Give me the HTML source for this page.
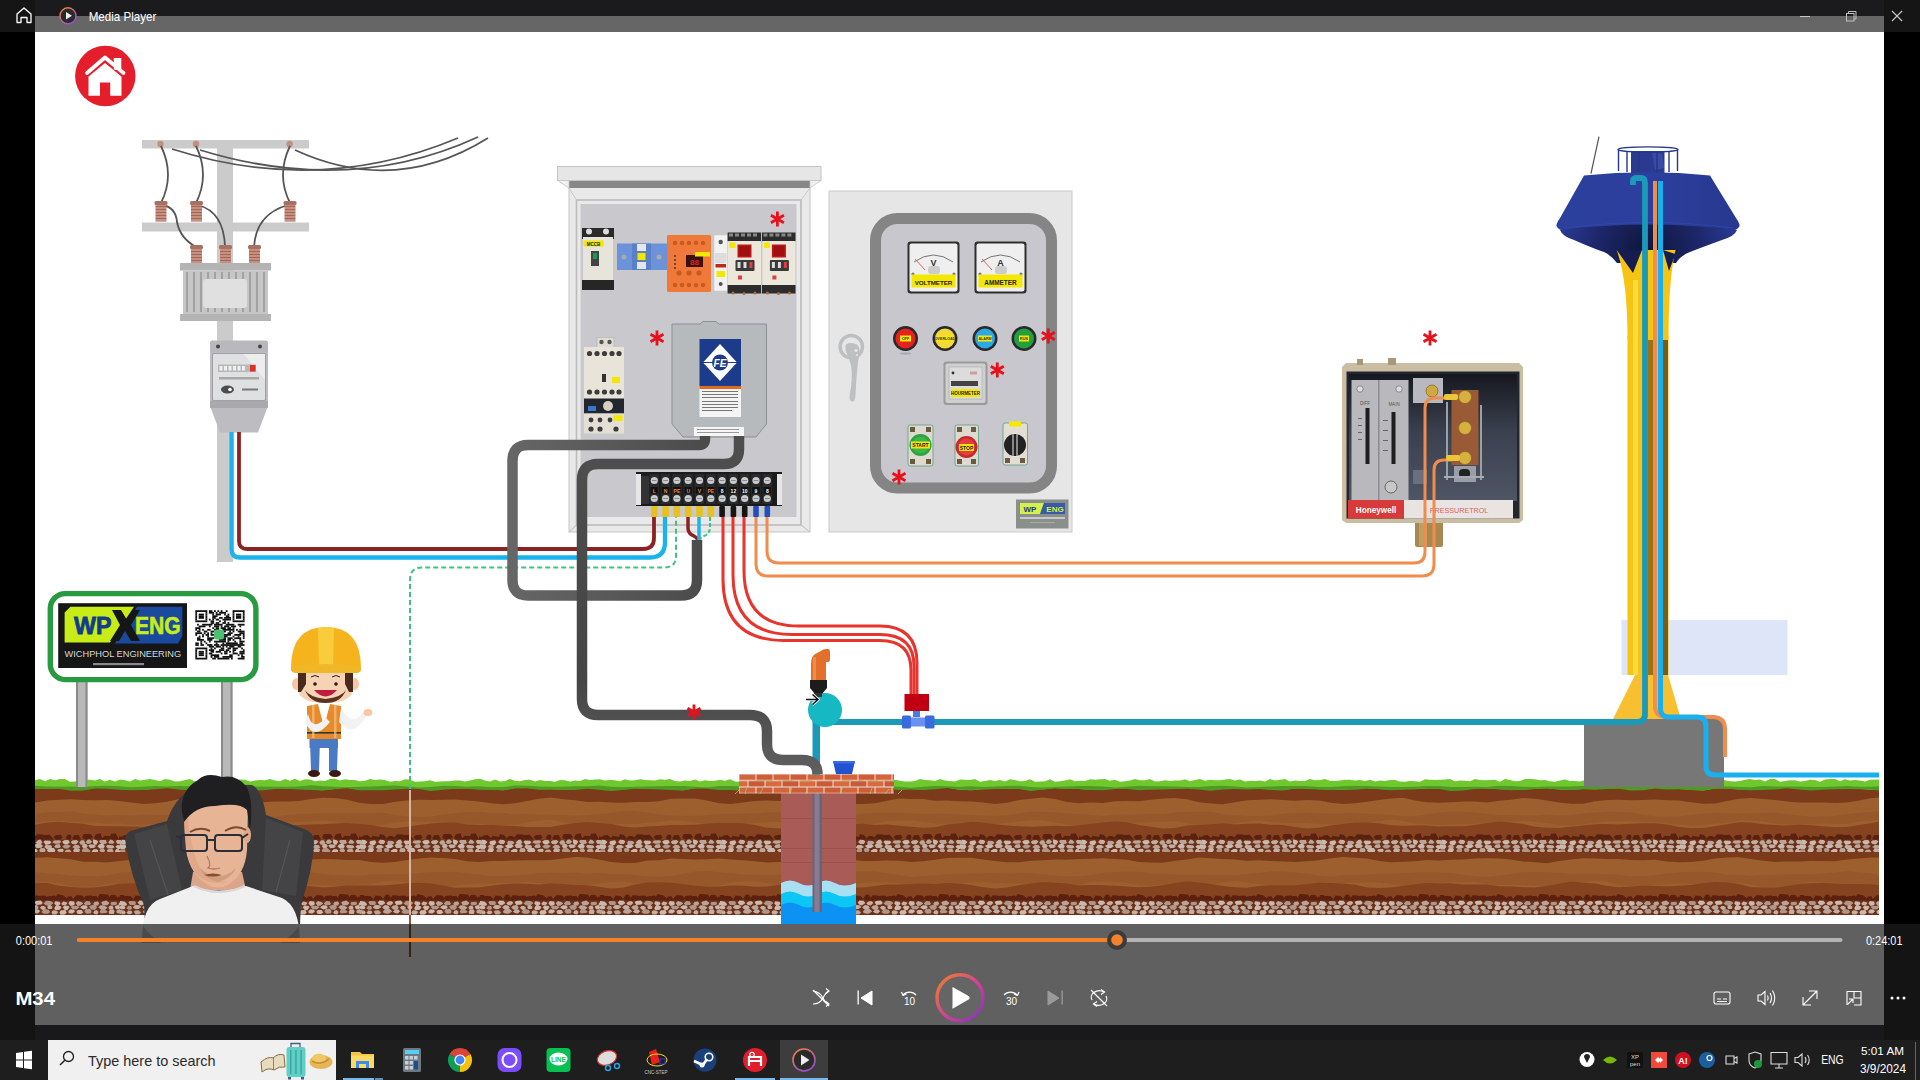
<!DOCTYPE html>
<html><head><meta charset="utf-8">
<style>
html,body{margin:0;padding:0;width:1920px;height:1080px;overflow:hidden;background:#000;font-family:"Liberation Sans",sans-serif;}
.a{position:absolute;}
#scene{position:absolute;left:0;top:0;}
</style></head><body>
<svg id="scene" width="1920" height="1080" viewBox="0 0 1920 1080">
<rect x="35" y="32" width="1849" height="993" fill="#fff"/>
<g id="ground">
<rect x="35" y="786" width="1844" height="127" fill="#9d5f2e"/>
<path d="M35,786.0 L1879,786.0 L1879,797.4 L1871,798.3 L1859,800.4 L1847,802.5 L1835,802.9 L1823,802.5 L1811,802.5 L1799,802.4 L1787,801.4 L1775,800.0 L1763,798.9 L1751,797.9 L1739,798.7 L1727,800.9 L1715,803.5 L1703,803.8 L1691,802.2 L1679,800.6 L1667,800.3 L1655,799.4 L1643,800.0 L1631,800.3 L1619,799.8 L1607,800.0 L1595,801.3 L1583,803.8 L1571,803.7 L1559,802.5 L1547,800.4 L1535,798.7 L1523,797.9 L1511,799.7 L1499,800.8 L1487,802.5 L1475,801.5 L1463,801.6 L1451,802.3 L1439,802.7 L1427,802.2 L1415,800.5 L1403,797.8 L1391,798.5 L1379,799.9 L1367,801.7 L1355,803.3 L1343,803.9 L1331,802.7 L1319,800.5 L1307,800.0 L1295,800.7 L1283,800.0 L1271,799.2 L1259,799.7 L1247,800.3 L1235,802.3 L1223,804.2 L1211,803.6 L1199,802.2 L1187,799.2 L1175,798.0 L1163,798.6 L1151,799.8 L1139,801.3 L1127,801.0 L1115,801.2 L1103,802.9 L1091,802.6 L1079,803.2 L1067,801.9 L1055,799.1 L1043,797.4 L1031,798.7 L1019,800.0 L1007,802.8 L995,803.9 L983,802.6 L971,801.5 L959,801.2 L947,800.6 L935,800.7 L923,799.0 L911,798.9 L899,798.5 L887,800.7 L875,803.2 L863,803.9 L851,803.9 L839,800.9 L827,799.1 L815,798.7 L803,799.0 L791,800.4 L779,801.0 L767,800.4 L755,801.0 L743,802.6 L731,804.0 L719,803.2 L707,800.4 L695,798.5 L683,798.4 L671,798.8 L659,801.3 L647,802.0 L635,802.1 L623,802.7 L611,802.5 L599,801.8 L587,802.0 L575,800.3 L563,799.2 L551,797.6 L539,798.8 L527,801.1 L515,803.3 L503,804.3 L491,803.2 L479,801.6 L467,800.4 L455,799.4 L443,799.8 L431,800.0 L419,799.7 L407,800.4 L395,801.8 L383,803.9 L371,804.0 L359,802.7 L347,799.7 L335,798.0 L323,797.8 L311,799.0 L299,801.1 L287,801.4 L275,801.6 L263,802.2 L251,802.6 L239,803.1 L227,802.3 L215,799.4 L203,798.4 L191,798.3 L179,799.1 L167,801.8 L155,803.2 L143,803.9 L131,802.4 L119,800.9 L107,800.0 L95,800.3 L83,799.9 L71,799.2 L59,799.7 L47,800.4 L35,802.4 Z" fill="#7b3b1b"/>
<path d="M35,814.0 L47,812.2 L59,812.0 L71,811.4 L83,813.4 L95,814.5 L107,815.4 L119,815.0 L131,815.6 L143,814.4 L155,815.0 L167,815.1 L179,814.7 L191,813.3 L203,812.2 L215,811.9 L227,812.8 L239,813.7 L251,815.7 L263,816.9 L275,816.7 L287,815.1 L299,814.3 L311,813.7 L323,813.1 L335,813.3 L347,812.9 L359,812.9 L371,812.9 L383,812.8 L395,814.7 L407,816.4 L419,817.0 L431,816.4 L443,814.6 L455,813.3 L467,812.0 L479,811.7 L491,812.9 L503,813.1 L515,814.7 L527,814.1 L539,814.8 L551,814.9 L563,814.9 L575,815.7 L587,815.1 L599,814.1 L611,813.0 L623,811.2 L635,810.9 L647,812.4 L659,814.6 L671,815.4 L683,815.8 L695,816.1 L707,814.9 L719,814.0 L731,814.2 L743,813.4 L755,813.5 L767,812.4 L779,812.2 L791,812.8 L803,814.0 L815,815.5 L827,816.2 L839,816.8 L851,815.6 L863,813.8 L875,812.7 L887,812.5 L899,812.7 L911,813.2 L923,814.2 L935,813.7 L947,813.7 L959,814.4 L971,814.9 L983,815.5 L995,815.8 L1007,815.2 L1019,813.5 L1031,811.8 L1043,811.7 L1055,812.4 L1067,813.2 L1079,814.2 L1091,815.1 L1103,816.1 L1115,814.6 L1127,814.9 L1139,814.5 L1151,814.0 L1163,814.2 L1175,812.5 L1187,811.8 L1199,811.8 L1211,811.9 L1223,814.3 L1235,815.3 L1247,816.1 L1259,815.9 L1271,815.4 L1283,813.7 L1295,812.9 L1307,812.7 L1319,813.2 L1331,813.7 L1343,813.5 L1355,813.0 L1367,813.7 L1379,814.2 L1391,815.1 L1403,816.3 L1415,816.3 L1427,814.3 L1439,812.7 L1451,811.5 L1463,811.7 L1475,812.4 L1487,813.8 L1499,815.1 L1511,815.1 L1523,815.5 L1535,815.4 L1547,814.4 L1559,815.5 L1571,815.0 L1583,813.4 L1595,812.6 L1607,811.8 L1619,812.1 L1631,812.6 L1643,814.5 L1655,816.4 L1667,816.8 L1679,816.5 L1691,814.7 L1703,813.8 L1715,812.8 L1727,813.3 L1739,813.5 L1751,813.2 L1763,813.1 L1775,812.6 L1787,814.2 L1799,815.6 L1811,816.8 L1823,816.6 L1835,816.1 L1847,813.9 L1859,813.0 L1871,812.1 L1879,811.6 L1879,820.6 L1871,820.6 L1859,821.6 L1847,823.7 L1835,824.0 L1823,823.3 L1811,824.2 L1799,824.4 L1787,824.5 L1775,823.4 L1763,821.4 L1751,820.5 L1739,820.4 L1727,822.7 L1715,823.8 L1703,825.0 L1691,825.5 L1679,824.4 L1667,823.3 L1655,822.2 L1643,822.0 L1631,821.4 L1619,821.3 L1607,821.4 L1595,822.8 L1583,824.2 L1571,825.5 L1559,824.9 L1547,823.1 L1535,821.7 L1523,820.7 L1511,821.6 L1499,822.3 L1487,822.5 L1475,823.7 L1463,824.1 L1451,824.6 L1439,824.7 L1427,824.1 L1415,823.3 L1403,820.9 L1391,819.6 L1379,821.2 L1367,822.7 L1355,824.9 L1343,824.5 L1331,824.2 L1319,824.0 L1307,823.0 L1295,822.7 L1283,822.9 L1271,821.9 L1259,820.3 L1247,821.8 L1235,823.0 L1223,825.0 L1211,826.4 L1199,825.3 L1187,823.3 L1175,821.2 L1163,821.7 L1151,821.9 L1139,822.7 L1127,822.4 L1115,822.9 L1103,823.8 L1091,824.6 L1079,825.1 L1067,824.6 L1055,822.4 L1043,820.4 L1031,820.1 L1019,821.4 L1007,822.8 L995,824.0 L983,824.4 L971,823.6 L959,824.2 L947,823.5 L935,823.6 L923,822.0 L911,820.5 L899,820.6 L887,821.3 L875,823.5 L863,825.0 L851,825.9 L839,823.8 L827,823.2 L815,822.1 L803,821.5 L791,821.8 L779,821.8 L767,822.3 L755,822.9 L743,824.0 L731,825.1 L719,825.6 L707,823.8 L695,822.4 L683,821.0 L671,820.6 L659,822.0 L647,822.7 L635,824.0 L623,823.8 L611,824.1 L599,824.8 L587,824.3 L575,823.4 L563,822.2 L551,819.6 L539,820.5 L527,822.2 L515,824.4 L503,825.1 L491,825.1 L479,823.8 L467,823.4 L455,822.9 L443,822.0 L431,822.3 L419,821.6 L407,821.2 L395,822.5 L383,824.8 L371,826.3 L359,825.5 L347,823.7 L335,821.8 L323,820.5 L311,821.3 L299,822.0 L287,822.5 L275,823.7 L263,823.6 L251,824.9 L239,825.3 L227,825.1 L215,823.3 L203,821.0 L191,819.6 L179,820.4 L167,823.1 L155,824.3 L143,824.6 L131,824.8 L119,823.2 L107,823.7 L95,822.5 L83,822.4 L71,821.7 L59,820.7 L47,821.2 L35,822.7 Z" fill="#96582a"/>
<path d="M35,824.7 L47,822.4 L59,821.7 L71,822.8 L83,823.7 L95,826.0 L107,826.3 L119,826.2 L131,826.5 L143,826.7 L155,826.5 L167,826.0 L179,824.2 L191,823.0 L203,822.2 L215,822.5 L227,825.4 L239,827.3 L251,828.1 L263,827.5 L275,825.7 L287,825.3 L299,824.9 L311,824.5 L323,824.2 L335,823.6 L347,822.9 L359,824.1 L371,825.1 L383,827.3 L395,828.2 L407,826.8 L419,825.1 L431,823.5 L443,822.6 L455,822.6 L467,824.5 L479,825.0 L491,825.0 L503,825.6 L515,826.1 L527,826.9 L539,827.1 L551,827.1 L563,824.8 L575,822.9 L587,822.0 L599,823.1 L611,823.9 L623,826.5 L635,827.5 L647,826.6 L659,826.0 L671,824.9 L683,824.9 L695,824.7 L707,823.6 L719,822.7 L731,822.9 L743,823.3 L755,825.1 L767,827.8 L779,828.3 L791,828.2 L803,825.9 L815,824.3 L827,822.6 L839,823.4 L851,824.2 L863,823.7 L875,824.9 L887,824.4 L899,825.7 L911,826.7 L923,827.8 L935,827.2 L947,824.6 L959,823.5 L971,821.7 L983,822.4 L995,824.2 L1007,825.6 L1019,826.3 L1031,826.7 L1043,826.2 L1055,825.7 L1067,826.2 L1079,825.3 L1091,823.8 L1103,822.6 L1115,821.5 L1127,822.3 L1139,825.0 L1151,826.7 L1163,828.5 L1175,827.9 L1187,825.5 L1199,825.1 L1211,824.3 L1223,823.2 L1235,824.4 L1247,823.7 L1259,823.6 L1271,824.7 L1283,825.1 L1295,827.1 L1307,828.6 L1319,827.8 L1331,825.6 L1343,823.9 L1355,822.5 L1367,822.6 L1379,823.3 L1391,825.3 L1403,825.8 L1415,825.6 L1427,825.5 L1439,826.4 L1451,826.2 L1463,826.2 L1475,825.0 L1487,822.9 L1499,821.6 L1511,822.4 L1523,824.1 L1535,826.7 L1547,827.7 L1559,828.1 L1571,826.8 L1583,825.4 L1595,824.2 L1607,823.9 L1619,824.6 L1631,823.8 L1643,823.2 L1655,823.2 L1667,824.6 L1679,827.1 L1691,828.3 L1703,828.0 L1715,826.2 L1727,824.2 L1739,822.2 L1751,822.4 L1763,824.2 L1775,825.1 L1787,825.6 L1799,824.8 L1811,825.2 L1823,826.3 L1835,827.2 L1847,827.1 L1859,824.9 L1871,823.3 L1879,821.6 L1879,846.0 L35,846.0 Z" fill="#85441f"/>
<defs><pattern id="rk839" x="0" y="831" width="120" height="22" patternUnits="userSpaceOnUse"><path d="M-2.6,7.7 L-4.3,11.1 L-7.6,11.9 L-9.1,6.7 L-8.5,3.6 L-3.9,3.2Z M5.3,7.8 L1.5,11.2 L-2.4,11.2 L-4.3,7.3 L-2.1,5.4 L3.1,5.7Z M11.5,7.3 L9.1,10.5 L3.1,10.7 L0.2,8.1 L3.7,4.2 L7.5,4.0Z M20.2,7.9 L16.7,11.1 L12.8,10.7 L10.8,8.1 L12.3,4.9 L18.0,5.6Z M26.5,6.8 L24.6,10.6 L19.7,10.5 L18.1,6.9 L20.4,3.1 L23.9,4.0Z M36.1,8.8 L34.0,11.7 L27.5,11.4 L24.9,9.4 L28.9,4.8 L33.0,5.2Z M45.5,7.0 L42.0,9.7 L37.2,10.1 L34.3,6.3 L37.0,3.3 L43.6,3.4Z M54.1,8.9 L49.6,13.1 L43.8,12.0 L40.6,7.6 L44.0,4.3 L49.6,3.5Z M62.6,6.4 L59.4,9.2 L56.6,9.2 L53.3,6.3 L55.7,4.3 L60.6,3.6Z M71.8,6.1 L70.1,9.3 L67.6,9.1 L65.7,6.8 L67.5,3.8 L70.6,3.6Z M80.9,7.9 L77.8,13.3 L75.2,12.6 L72.2,7.0 L74.3,3.9 L78.6,4.0Z M93.0,6.0 L89.8,9.4 L84.8,8.6 L82.2,6.6 L83.8,3.0 L90.5,3.0Z M102.1,6.9 L100.2,10.7 L96.1,9.3 L94.1,6.9 L95.7,3.2 L100.8,2.2Z M114.2,7.8 L111.7,10.9 L104.6,11.4 L101.2,7.9 L104.9,4.8 L109.4,5.1Z M118.3,7.3 L116.5,10.8 L110.2,10.7 L109.6,6.6 L111.0,2.7 L115.8,2.4Z M125.0,7.2 L123.5,12.3 L120.0,12.5 L118.4,8.4 L120.3,3.3 L122.9,2.5Z" fill="#5c200e"/><rect x="0" y="8.5" width="120" height="13.5" fill="#6e2f16"/><path d="M7.4,11.0 L5.5,13.2 L2.0,13.1 L0.7,11.5 L1.9,8.8 L5.0,9.0Z" fill="#c9b9ae"/><path d="M16.3,11.6 L14.4,14.2 L10.6,13.7 L9.3,11.9 L10.3,9.9 L15.1,9.3Z" fill="#c9b9ae"/><path d="M25.4,10.5 L23.7,13.1 L20.2,13.1 L18.1,11.1 L20.1,8.8 L23.6,8.9Z" fill="#c2b0a5"/><path d="M34.6,11.8 L31.7,13.9 L27.8,13.6 L27.1,12.1 L28.1,9.8 L32.7,9.9Z" fill="#b9a69a"/><path d="M42.4,11.4 L40.8,13.3 L38.0,13.7 L35.6,11.6 L38.1,9.0 L40.5,8.6Z" fill="#c2b0a5"/><path d="M51.5,11.2 L49.9,13.1 L45.9,14.1 L43.4,11.1 L45.0,9.6 L49.8,9.8Z" fill="#c9b9ae"/><path d="M61.2,10.6 L59.7,12.6 L55.4,12.8 L52.3,11.4 L53.9,9.4 L59.7,9.3Z" fill="#b9a69a"/><path d="M69.9,11.2 L67.6,13.2 L64.0,13.2 L62.1,10.7 L64.1,9.3 L68.2,9.1Z" fill="#c9b9ae"/><path d="M78.5,10.4 L75.9,13.4 L72.5,13.1 L70.8,11.2 L72.4,9.4 L76.4,8.9Z" fill="#c2b0a5"/><path d="M85.4,11.5 L83.3,14.0 L80.3,13.5 L79.3,11.4 L81.0,9.2 L83.8,9.2Z" fill="#b9a69a"/><path d="M92.0,10.8 L90.6,12.4 L87.6,12.9 L85.6,11.3 L87.7,8.5 L90.0,8.5Z" fill="#b9a69a"/><path d="M98.2,10.5 L96.4,13.8 L94.0,13.8 L92.7,10.8 L93.4,8.6 L96.8,9.2Z" fill="#c9b9ae"/><path d="M106.7,11.2 L106.1,12.8 L101.3,13.3 L99.0,10.3 L100.4,8.9 L105.9,9.0Z" fill="#b9a69a"/><path d="M114.5,11.2 L113.1,12.7 L109.3,12.7 L108.2,11.4 L110.3,8.5 L112.4,8.9Z" fill="#b9a69a"/><path d="M123.4,11.2 L122.2,12.9 L117.9,13.2 L115.8,10.8 L116.8,9.1 L120.8,9.0Z" fill="#c2b0a5"/><path d="M3.0,11.3 L0.8,13.8 L-1.8,13.5 L-4.5,10.9 L-1.9,8.9 L0.8,8.9Z" fill="#c2b0a5"/><path d="M6.5,16.0 L4.6,18.1 L0.9,18.1 L-1.7,16.0 L-0.0,13.5 L5.0,13.3Z" fill="#c9b9ae"/><path d="M13.9,16.0 L13.1,18.1 L9.9,18.2 L7.9,15.5 L9.4,13.7 L12.9,14.0Z" fill="#b9a69a"/><path d="M24.1,16.1 L21.2,17.8 L18.3,17.9 L15.6,16.4 L17.7,14.1 L21.4,14.0Z" fill="#c2b0a5"/><path d="M33.8,15.2 L31.2,17.1 L27.5,17.2 L24.8,15.0 L28.2,13.3 L32.0,13.4Z" fill="#c9b9ae"/><path d="M42.9,14.8 L41.5,16.8 L36.4,17.3 L34.5,14.3 L36.8,12.4 L40.8,13.0Z" fill="#c2b0a5"/><path d="M52.3,15.9 L49.4,18.4 L46.9,18.2 L44.3,15.9 L45.6,14.0 L51.1,14.2Z" fill="#c2b0a5"/><path d="M60.9,15.7 L59.4,17.1 L55.8,17.2 L54.2,15.7 L55.8,13.4 L59.5,13.0Z" fill="#b9a69a"/><path d="M70.8,14.9 L68.1,17.6 L64.4,17.4 L62.3,15.4 L65.0,13.6 L68.0,13.5Z" fill="#ad978a"/><path d="M80.3,16.2 L79.1,17.5 L75.3,18.1 L72.2,16.0 L74.9,14.1 L78.5,14.0Z" fill="#b9a69a"/><path d="M87.8,15.0 L86.1,17.4 L83.3,17.2 L81.8,15.2 L83.7,12.6 L86.3,13.0Z" fill="#c2b0a5"/><path d="M95.8,15.1 L94.6,16.7 L90.3,17.2 L88.2,14.8 L90.1,13.3 L94.7,13.7Z" fill="#c2b0a5"/><path d="M104.9,15.3 L103.5,17.4 L100.2,17.7 L97.4,15.4 L99.2,13.2 L103.2,12.8Z" fill="#c9b9ae"/><path d="M114.6,16.3 L112.3,17.6 L107.9,17.4 L106.0,15.3 L107.4,13.9 L112.9,14.2Z" fill="#c2b0a5"/><path d="M123.5,15.5 L122.2,17.8 L117.9,18.2 L115.4,15.5 L117.5,14.1 L122.3,14.5Z" fill="#c9b9ae"/><path d="M3.8,15.7 L2.4,17.0 L-2.5,17.5 L-3.9,15.9 L-2.4,13.6 L2.7,13.9Z" fill="#c9b9ae"/><path d="M5.6,20.0 L4.7,22.4 L1.5,22.3 L-0.6,20.3 L0.6,18.5 L4.5,18.3Z" fill="#ad978a"/><path d="M14.1,19.1 L12.1,21.8 L9.3,21.7 L7.4,19.9 L8.6,17.2 L13.1,17.6Z" fill="#c9b9ae"/><path d="M22.4,19.2 L21.3,21.5 L18.1,21.6 L16.1,20.0 L17.9,17.4 L20.9,17.1Z" fill="#ad978a"/><path d="M29.7,18.9 L27.8,21.7 L25.0,21.3 L23.8,19.0 L24.8,16.9 L28.8,17.0Z" fill="#ad978a"/><path d="M37.8,19.7 L35.8,22.3 L33.3,22.2 L30.4,20.0 L33.5,17.9 L36.4,18.1Z" fill="#c9b9ae"/><path d="M45.7,19.5 L44.9,21.1 L40.2,21.7 L39.3,19.7 L40.2,17.3 L44.3,17.0Z" fill="#b9a69a"/><path d="M55.5,19.8 L54.2,21.5 L49.1,21.5 L46.7,19.8 L49.0,17.0 L53.9,17.0Z" fill="#c9b9ae"/><path d="M63.9,19.6 L62.4,21.3 L59.6,21.4 L57.0,19.5 L58.6,18.1 L62.9,17.7Z" fill="#c2b0a5"/><path d="M71.3,20.3 L70.3,22.2 L66.7,22.1 L64.6,20.3 L66.4,18.8 L69.6,18.5Z" fill="#b9a69a"/><path d="M80.2,18.8 L79.0,21.2 L75.0,22.0 L73.0,19.7 L74.4,17.6 L79.1,17.7Z" fill="#c2b0a5"/><path d="M90.7,20.1 L87.9,22.4 L84.6,22.5 L81.6,19.8 L83.2,17.3 L87.3,17.1Z" fill="#ad978a"/><path d="M98.5,20.0 L96.7,22.0 L92.6,21.8 L91.6,20.6 L93.6,18.2 L97.0,18.3Z" fill="#c9b9ae"/><path d="M105.2,19.4 L104.1,21.2 L101.5,21.9 L99.3,19.3 L100.6,18.2 L103.5,17.5Z" fill="#b9a69a"/><path d="M113.8,20.2 L111.2,21.8 L108.4,22.2 L106.6,19.3 L108.7,18.0 L112.2,17.8Z" fill="#b9a69a"/><path d="M120.5,20.7 L119.1,22.5 L116.6,22.9 L114.8,20.0 L116.4,18.0 L118.8,18.2Z" fill="#c9b9ae"/><path d="M0.5,19.9 L-1.1,21.7 L-4.0,21.9 L-5.3,19.7 L-3.2,17.6 L-0.8,17.3Z" fill="#c9b9ae"/></pattern></defs>
<rect x="35" y="831" width="1844" height="22" fill="url(#rk839)"/>
<path d="M35,852.0 L1879,852.0 L1879,857.6 L1871,857.4 L1859,858.6 L1847,859.4 L1835,861.2 L1823,861.1 L1811,861.1 L1799,861.6 L1787,861.4 L1775,862.0 L1763,860.8 L1751,859.1 L1739,857.3 L1727,857.5 L1715,858.6 L1703,860.8 L1691,862.1 L1679,862.3 L1667,861.6 L1655,859.8 L1643,860.2 L1631,860.0 L1619,859.1 L1607,858.9 L1595,858.5 L1583,858.2 L1571,859.4 L1559,860.9 L1547,863.3 L1535,862.3 L1523,861.4 L1511,859.5 L1499,858.4 L1487,858.2 L1475,858.4 L1463,859.4 L1451,859.7 L1439,860.6 L1427,860.1 L1415,861.2 L1403,861.7 L1391,862.2 L1379,860.9 L1367,858.5 L1355,857.8 L1343,857.1 L1331,858.2 L1319,860.3 L1307,861.2 L1295,861.9 L1283,861.5 L1271,861.0 L1259,860.2 L1247,860.7 L1235,859.6 L1223,858.9 L1211,858.2 L1199,857.5 L1187,859.5 L1175,860.8 L1163,862.7 L1151,862.5 L1139,861.9 L1127,859.7 L1115,859.1 L1103,858.3 L1091,858.7 L1079,859.0 L1067,859.7 L1055,859.4 L1043,860.3 L1031,860.8 L1019,862.2 L1007,862.2 L995,861.0 L983,859.4 L971,857.7 L959,857.8 L947,857.9 L935,859.7 L923,861.2 L911,862.0 L899,860.7 L887,860.5 L875,860.9 L863,861.1 L851,859.7 L839,858.4 L827,857.8 L815,857.5 L803,858.3 L791,860.8 L779,862.1 L767,862.6 L755,861.2 L743,860.2 L731,859.4 L719,858.5 L707,859.2 L695,859.4 L683,858.9 L671,858.4 L659,860.2 L647,860.6 L635,863.0 L623,862.9 L611,862.0 L599,859.5 L587,857.5 L575,856.9 L563,858.6 L551,859.9 L539,860.3 L527,860.2 L515,860.4 L503,860.9 L491,861.1 L479,861.9 L467,861.2 L455,859.1 L443,857.9 L431,857.5 L419,858.5 L407,859.9 L395,861.9 L383,862.8 L371,861.9 L359,860.1 L347,860.0 L335,859.3 L323,859.0 L311,859.4 L299,858.4 L287,858.1 L275,859.4 L263,860.5 L251,862.7 L239,863.4 L227,861.4 L215,860.6 L203,858.4 L191,858.1 L179,858.7 L167,859.7 L155,860.0 L143,860.5 L131,860.1 L119,861.0 L107,862.4 L95,861.7 L83,861.7 L71,859.3 L59,858.2 L47,857.3 L35,857.7 Z" fill="#7b3b1b"/>
<path d="M35,871.9 L47,873.4 L59,873.9 L71,875.6 L83,876.2 L95,876.2 L107,875.3 L119,872.9 L131,871.9 L143,872.2 L155,872.8 L167,873.6 L179,873.5 L191,874.4 L203,874.5 L215,875.1 L227,875.1 L239,875.9 L251,875.0 L263,874.8 L275,873.2 L287,872.0 L299,870.9 L311,872.3 L323,874.1 L335,875.3 L347,875.3 L359,875.8 L371,874.6 L383,874.5 L395,873.9 L407,874.2 L419,873.1 L431,872.1 L443,871.9 L455,871.7 L467,873.4 L479,874.5 L491,876.1 L503,876.1 L515,875.6 L527,874.4 L539,873.3 L551,872.5 L563,873.0 L575,872.5 L587,873.7 L599,872.9 L611,874.1 L623,874.1 L635,875.0 L647,876.2 L659,876.7 L671,876.0 L683,873.7 L695,871.6 L707,871.0 L719,872.2 L731,873.3 L743,874.6 L755,874.7 L767,875.2 L779,874.4 L791,874.4 L803,874.7 L815,875.4 L827,874.5 L839,873.7 L851,871.5 L863,871.4 L875,871.6 L887,873.3 L899,874.8 L911,876.9 L923,876.1 L935,875.3 L947,874.3 L959,873.8 L971,873.6 L983,873.2 L995,873.1 L1007,873.4 L1019,872.7 L1031,873.0 L1043,874.6 L1055,875.4 L1067,876.4 L1079,876.2 L1091,875.0 L1103,873.1 L1115,871.9 L1127,871.6 L1139,871.8 L1151,873.8 L1163,873.7 L1175,874.7 L1187,874.7 L1199,874.7 L1211,874.9 L1223,875.0 L1235,875.1 L1247,874.0 L1259,872.7 L1271,871.3 L1283,871.7 L1295,872.4 L1307,873.5 L1319,875.5 L1331,876.7 L1343,875.2 L1355,875.0 L1367,874.7 L1379,873.6 L1391,873.7 L1403,873.2 L1415,872.6 L1427,872.5 L1439,872.5 L1451,873.0 L1463,874.8 L1475,876.2 L1487,877.0 L1499,875.5 L1511,874.0 L1523,872.6 L1535,871.8 L1547,872.5 L1559,872.8 L1571,874.0 L1583,873.8 L1595,873.8 L1607,874.6 L1619,874.5 L1631,876.3 L1643,876.3 L1655,875.1 L1667,873.6 L1679,872.6 L1691,871.7 L1703,871.8 L1715,872.4 L1727,874.8 L1739,875.0 L1751,875.9 L1763,875.3 L1775,875.2 L1787,874.6 L1799,873.7 L1811,874.5 L1823,873.5 L1835,872.4 L1847,871.2 L1859,872.5 L1871,873.5 L1879,875.0 L1879,884.5 L1871,884.8 L1859,883.5 L1847,883.7 L1835,882.4 L1823,882.5 L1811,881.5 L1799,883.5 L1787,886.0 L1775,886.4 L1763,887.1 L1751,884.5 L1739,882.7 L1727,882.2 L1715,882.4 L1703,883.7 L1691,883.8 L1679,883.6 L1667,884.2 L1655,885.0 L1643,886.7 L1631,885.9 L1619,884.9 L1607,881.7 L1595,880.8 L1583,882.0 L1571,884.0 L1559,885.3 L1547,885.7 L1535,885.6 L1523,884.9 L1511,884.9 L1499,885.0 L1487,884.1 L1475,881.9 L1463,881.9 L1451,882.0 L1439,883.6 L1427,885.7 L1415,886.6 L1403,886.0 L1391,883.9 L1379,882.7 L1367,882.4 L1355,882.6 L1343,883.1 L1331,882.4 L1319,882.9 L1307,884.1 L1295,886.2 L1283,887.2 L1271,885.7 L1259,884.1 L1247,882.4 L1235,881.1 L1223,882.5 L1211,884.4 L1199,885.3 L1187,885.1 L1175,885.3 L1163,884.7 L1151,885.5 L1139,884.9 L1127,883.0 L1115,881.4 L1103,881.5 L1091,881.8 L1079,884.9 L1067,886.6 L1055,887.0 L1043,885.0 L1031,883.9 L1019,883.4 L1007,883.3 L995,883.3 L983,882.0 L971,882.8 L959,882.9 L947,884.4 L935,886.8 L923,886.5 L911,885.4 L899,883.2 L887,882.3 L875,882.4 L863,882.9 L851,884.0 L839,884.2 L827,884.8 L815,884.8 L803,886.1 L791,885.4 L779,884.5 L767,882.9 L755,881.5 L743,881.0 L731,882.6 L719,885.2 L707,885.9 L695,886.5 L683,885.0 L671,884.4 L659,883.8 L647,884.1 L635,883.0 L623,881.8 L611,882.0 L599,883.5 L587,885.3 L575,886.5 L563,886.4 L551,884.5 L539,883.0 L527,881.7 L515,882.7 L503,882.6 L491,883.9 L479,883.6 L467,884.5 L455,885.4 L443,886.8 L431,886.3 L419,884.3 L407,882.2 L395,880.5 L383,881.6 L371,883.9 L359,884.6 L347,886.1 L335,885.4 L323,884.8 L311,884.4 L299,885.1 L287,883.8 L275,882.9 L263,881.2 L251,881.5 L239,883.4 L227,886.1 L215,887.1 L203,886.4 L191,883.8 L179,882.5 L167,882.9 L155,882.7 L143,882.6 L131,882.9 L119,883.2 L107,884.2 L95,886.3 L83,886.7 L71,886.3 L59,883.3 L47,882.3 L35,881.9 Z" fill="#96582a"/>
<path d="M35,883.1 L47,883.1 L59,885.8 L71,887.1 L83,887.7 L95,887.4 L107,885.9 L119,883.7 L131,883.2 L143,883.6 L155,884.0 L167,884.0 L179,884.8 L191,884.7 L203,886.1 L215,887.0 L227,887.6 L239,886.3 L251,884.8 L263,882.4 L275,881.7 L287,882.1 L299,884.5 L311,886.3 L323,887.5 L335,886.7 L347,885.6 L359,885.5 L371,885.5 L383,885.4 L395,884.6 L407,883.3 L419,882.7 L431,883.6 L443,885.6 L455,887.8 L467,887.6 L479,887.4 L491,885.8 L503,884.3 L515,883.6 L527,883.7 L539,884.4 L551,883.5 L563,884.0 L575,885.0 L587,885.2 L599,886.8 L611,888.4 L623,887.7 L635,884.5 L647,882.4 L659,882.3 L671,882.8 L683,884.1 L695,885.7 L707,886.5 L719,886.5 L731,885.5 L743,885.8 L755,886.8 L767,886.4 L779,884.8 L791,882.6 L803,881.7 L815,882.4 L827,884.1 L839,887.2 L851,887.6 L863,887.5 L875,886.1 L887,884.6 L899,884.4 L911,884.0 L923,883.6 L935,884.0 L947,882.9 L959,883.4 L971,885.1 L983,887.2 L995,888.6 L1007,887.4 L1019,885.2 L1031,883.6 L1043,882.0 L1055,882.7 L1067,883.6 L1079,885.4 L1091,885.1 L1103,885.3 L1115,885.7 L1127,886.4 L1139,887.3 L1151,886.7 L1163,885.2 L1175,882.9 L1187,881.2 L1199,882.6 L1211,883.9 L1223,886.0 L1235,887.3 L1247,887.8 L1259,886.1 L1271,885.2 L1283,885.4 L1295,885.3 L1307,884.0 L1319,882.8 L1331,883.0 L1343,883.5 L1355,884.7 L1367,887.4 L1379,888.1 L1391,887.5 L1403,886.1 L1415,884.3 L1427,882.9 L1439,883.4 L1451,883.2 L1463,884.4 L1475,884.5 L1487,884.4 L1499,886.2 L1511,886.4 L1523,887.2 L1535,887.6 L1547,885.9 L1559,883.7 L1571,881.6 L1583,882.7 L1595,883.4 L1607,886.0 L1619,887.3 L1631,886.4 L1643,885.8 L1655,886.1 L1667,886.2 L1679,885.7 L1691,885.1 L1703,883.1 L1715,882.1 L1727,882.2 L1739,884.1 L1751,887.2 L1763,887.6 L1775,887.5 L1787,886.1 L1799,884.0 L1811,883.3 L1823,883.1 L1835,883.4 L1847,884.0 L1859,884.0 L1871,884.3 L1879,885.1 L1879,902.0 L35,902.0 Z" fill="#85441f"/>
<defs><pattern id="rk900" x="0" y="892" width="120" height="23" patternUnits="userSpaceOnUse"><path d="M-1.5,5.5 L-2.8,10.9 L-9.5,10.2 L-10.9,7.1 L-8.3,1.7 L-2.4,1.4Z M7.8,6.3 L3.1,11.4 L-1.5,11.1 L-3.1,8.2 L-1.9,2.9 L3.5,3.0Z M13.7,7.6 L12.1,10.5 L6.4,11.4 L2.1,7.4 L4.8,3.9 L10.6,4.0Z M23.5,7.3 L19.9,10.8 L14.4,10.5 L13.6,6.7 L15.4,3.5 L20.4,4.1Z M31.5,7.3 L30.6,9.8 L25.9,10.4 L23.1,6.4 L25.8,2.7 L28.8,2.2Z M39.6,6.2 L37.2,11.2 L30.9,10.2 L29.6,7.3 L32.5,3.2 L38.0,3.4Z M48.2,7.2 L44.2,10.7 L37.9,11.2 L34.6,7.1 L37.1,4.1 L45.4,3.6Z M58.9,8.5 L53.9,12.0 L47.8,11.4 L44.4,8.7 L47.1,4.6 L54.8,3.4Z M67.1,6.4 L65.3,12.2 L56.3,11.5 L53.5,8.5 L57.5,2.0 L63.7,3.6Z M73.5,8.7 L71.6,13.0 L67.8,12.2 L66.4,8.2 L67.6,4.5 L71.7,4.2Z M84.4,6.9 L82.7,11.1 L74.7,11.6 L71.9,7.7 L76.9,3.1 L83.0,3.7Z M95.5,6.7 L94.1,9.7 L86.3,9.8 L83.8,6.3 L85.6,3.7 L91.7,3.4Z M98.3,8.2 L96.7,10.4 L93.6,10.8 L91.9,6.5 L93.0,4.0 L97.0,4.3Z M111.3,6.8 L106.7,10.8 L100.1,10.3 L97.0,7.6 L99.5,2.1 L107.5,2.6Z M118.4,7.0 L116.6,11.7 L110.1,10.3 L108.2,8.1 L111.0,2.9 L115.2,2.8Z M127.9,8.0 L126.1,10.6 L120.0,10.9 L116.6,7.7 L117.9,4.8 L124.4,4.6Z" fill="#5c200e"/><rect x="0" y="8.5" width="120" height="14.5" fill="#6e2f16"/><path d="M7.0,11.9 L6.3,13.7 L1.3,13.8 L-0.5,11.4 L1.5,10.0 L4.6,9.5Z" fill="#c9b9ae"/><path d="M16.0,11.1 L14.7,12.9 L10.2,12.9 L8.3,10.6 L9.7,8.9 L15.1,9.2Z" fill="#ad978a"/><path d="M25.4,11.0 L22.3,13.3 L19.9,13.2 L17.7,10.8 L19.3,8.4 L23.3,8.7Z" fill="#c9b9ae"/><path d="M33.3,11.0 L30.9,13.4 L28.0,12.9 L26.3,11.2 L28.8,9.2 L31.9,9.2Z" fill="#c2b0a5"/><path d="M42.9,11.1 L41.2,12.6 L36.3,12.9 L34.7,10.5 L35.8,9.0 L40.8,8.4Z" fill="#c9b9ae"/><path d="M53.4,11.1 L50.7,13.4 L46.2,13.6 L43.5,11.4 L46.2,8.8 L50.7,8.9Z" fill="#ad978a"/><path d="M60.4,11.5 L59.1,13.7 L56.4,14.0 L54.3,11.4 L55.1,9.3 L59.4,9.8Z" fill="#c9b9ae"/><path d="M67.4,11.2 L65.5,13.2 L62.3,13.3 L61.3,11.8 L63.2,9.6 L66.2,10.0Z" fill="#c2b0a5"/><path d="M74.8,11.9 L73.9,13.3 L70.5,13.9 L68.5,11.5 L69.8,9.1 L74.1,9.5Z" fill="#c9b9ae"/><path d="M83.1,11.3 L80.9,13.5 L77.6,13.9 L75.8,11.0 L78.0,9.0 L81.4,9.9Z" fill="#b9a69a"/><path d="M91.0,11.7 L89.9,13.0 L85.6,13.3 L83.7,11.6 L86.2,9.1 L89.5,9.2Z" fill="#ad978a"/><path d="M99.1,11.5 L98.0,13.6 L95.0,13.7 L93.1,12.1 L94.8,9.8 L98.1,9.5Z" fill="#b9a69a"/><path d="M109.4,11.0 L107.4,13.2 L102.8,13.3 L101.3,10.7 L102.4,9.5 L106.5,8.6Z" fill="#b9a69a"/><path d="M117.1,11.7 L115.7,13.3 L111.4,13.3 L110.4,10.9 L111.8,9.9 L116.2,9.8Z" fill="#ad978a"/><path d="M125.3,11.1 L123.7,13.5 L120.0,14.3 L118.3,12.3 L120.6,9.3 L123.7,9.6Z" fill="#c9b9ae"/><path d="M4.6,11.3 L3.5,13.7 L-0.2,13.2 L-1.8,11.3 L-0.3,9.0 L3.2,9.3Z" fill="#c9b9ae"/><path d="M5.5,15.8 L4.6,17.0 L1.0,17.4 L-1.0,15.0 L0.5,13.9 L4.2,13.8Z" fill="#c9b9ae"/><path d="M12.2,16.2 L10.2,17.9 L8.1,17.5 L6.3,16.2 L8.3,13.7 L11.1,13.9Z" fill="#ad978a"/><path d="M21.4,14.9 L18.5,17.1 L15.7,17.2 L12.7,15.5 L15.2,12.7 L19.3,13.2Z" fill="#c2b0a5"/><path d="M29.8,15.5 L28.4,17.1 L24.3,17.6 L22.2,15.3 L24.9,13.0 L28.2,13.5Z" fill="#c2b0a5"/><path d="M38.6,15.4 L37.3,17.9 L33.8,17.7 L31.2,15.8 L33.1,13.5 L37.0,12.9Z" fill="#b9a69a"/><path d="M46.0,15.7 L45.0,17.8 L42.0,18.0 L39.9,15.4 L41.7,14.1 L44.0,13.9Z" fill="#c2b0a5"/><path d="M52.5,15.1 L51.6,17.0 L48.3,17.1 L47.2,15.1 L48.5,13.1 L50.8,13.2Z" fill="#c2b0a5"/><path d="M61.5,15.6 L59.3,18.1 L55.3,18.1 L54.2,16.5 L55.4,14.0 L60.3,14.1Z" fill="#c9b9ae"/><path d="M69.5,15.3 L67.4,18.2 L64.7,18.0 L62.7,15.2 L64.5,13.5 L68.5,14.0Z" fill="#c9b9ae"/><path d="M79.8,15.0 L76.9,17.4 L72.7,17.2 L70.7,15.0 L72.1,13.7 L77.5,14.0Z" fill="#ad978a"/><path d="M87.8,15.2 L86.4,16.7 L83.2,17.4 L80.0,15.5 L82.8,13.2 L86.2,13.3Z" fill="#c9b9ae"/><path d="M97.0,15.3 L94.9,17.9 L91.0,17.6 L89.0,14.6 L92.1,12.9 L95.5,12.9Z" fill="#ad978a"/><path d="M107.6,15.8 L105.4,17.2 L101.5,17.9 L98.2,15.2 L100.5,13.2 L104.5,13.6Z" fill="#b9a69a"/><path d="M113.6,16.0 L112.5,17.2 L109.3,17.6 L108.4,15.2 L109.9,13.7 L112.4,13.5Z" fill="#c2b0a5"/><path d="M120.5,15.6 L118.9,17.1 L116.3,17.2 L114.7,15.1 L116.3,13.4 L118.6,12.9Z" fill="#c9b9ae"/><path d="M0.8,15.8 L-1.4,17.7 L-3.8,17.7 L-5.2,15.1 L-3.3,13.2 L-1.1,13.3Z" fill="#c9b9ae"/><path d="M5.8,20.9 L4.3,22.2 L2.1,22.3 L0.4,20.2 L1.3,18.2 L4.6,18.7Z" fill="#c2b0a5"/><path d="M12.4,20.5 L11.0,22.1 L8.3,22.3 L6.5,20.8 L8.2,18.6 L11.4,18.7Z" fill="#c2b0a5"/><path d="M21.1,20.6 L19.5,22.2 L15.6,22.5 L13.8,19.7 L15.1,18.4 L18.8,18.2Z" fill="#b9a69a"/><path d="M32.2,19.4 L28.6,21.8 L25.0,21.6 L22.5,19.9 L25.5,16.9 L29.4,16.8Z" fill="#b9a69a"/><path d="M40.1,19.2 L37.9,21.5 L35.4,21.3 L32.9,19.8 L34.7,17.9 L38.5,17.6Z" fill="#c2b0a5"/><path d="M50.1,19.9 L48.2,21.8 L43.7,21.8 L41.3,19.9 L44.3,17.1 L48.7,17.7Z" fill="#ad978a"/><path d="M58.3,19.9 L56.3,22.5 L52.6,22.5 L51.4,20.3 L53.1,18.2 L56.2,18.6Z" fill="#c2b0a5"/><path d="M66.7,20.7 L64.8,22.5 L60.6,22.8 L59.4,20.3 L61.0,18.3 L65.4,18.1Z" fill="#c9b9ae"/><path d="M75.1,19.2 L72.6,21.5 L68.9,21.2 L68.3,19.2 L70.4,17.2 L73.3,17.4Z" fill="#c9b9ae"/><path d="M83.5,20.4 L81.0,22.0 L77.7,21.9 L76.4,19.7 L77.9,18.0 L81.5,17.9Z" fill="#c9b9ae"/><path d="M91.5,18.9 L90.9,21.6 L86.6,21.7 L84.3,19.4 L85.7,17.0 L89.9,16.7Z" fill="#ad978a"/><path d="M98.6,19.9 L97.2,22.6 L94.4,22.1 L93.1,20.5 L94.7,18.5 L96.8,18.0Z" fill="#c2b0a5"/><path d="M107.8,19.9 L105.6,21.1 L100.9,21.4 L99.6,19.6 L102.2,16.6 L105.0,17.1Z" fill="#ad978a"/><path d="M114.7,19.3 L113.7,22.0 L109.6,22.1 L108.5,19.9 L110.1,17.5 L113.3,17.3Z" fill="#c2b0a5"/><path d="M122.8,19.4 L120.4,21.8 L117.1,21.3 L116.2,19.7 L117.3,17.7 L120.6,16.9Z" fill="#b9a69a"/><path d="M2.9,19.2 L0.8,21.9 L-1.8,22.0 L-4.2,19.9 L-2.9,17.7 L1.5,18.1Z" fill="#b9a69a"/></pattern></defs>
<rect x="35" y="892" width="1844" height="23" fill="url(#rk900)"/>
<path d="M35,780.2 L40,779.1 L45,781.3 L50,778.9 L55,780.3 L60,779.1 L65,779.1 L70,781.7 L75,781.6 L80,779.0 L85,779.7 L90,779.8 L95,780.4 L100,779.1 L105,781.4 L110,779.8 L115,781.6 L120,779.5 L125,780.2 L130,781.5 L135,779.0 L140,780.6 L145,779.8 L150,779.1 L155,780.0 L160,781.2 L165,778.9 L170,779.7 L175,781.5 L180,781.2 L185,780.0 L190,779.0 L195,781.4 L200,780.0 L205,780.0 L210,780.0 L215,780.6 L220,780.1 L225,780.3 L230,781.1 L235,779.7 L240,779.6 L245,779.7 L250,781.6 L255,780.4 L260,779.9 L265,780.2 L270,778.9 L275,780.5 L280,781.2 L285,779.1 L290,780.7 L295,778.8 L300,781.1 L305,779.3 L310,779.5 L315,781.2 L320,780.6 L325,781.0 L330,778.9 L335,778.8 L340,780.4 L345,779.3 L350,780.1 L355,780.0 L360,781.3 L365,780.8 L370,779.1 L375,780.0 L380,779.6 L385,780.0 L390,781.7 L395,780.9 L400,781.2 L405,779.2 L410,779.7 L415,781.7 L420,781.5 L425,781.3 L430,780.3 L435,781.8 L440,781.6 L445,781.3 L450,781.3 L455,780.4 L460,780.5 L465,781.5 L470,780.6 L475,779.2 L480,778.8 L485,780.5 L490,781.5 L495,779.6 L500,781.5 L505,781.1 L510,779.1 L515,780.7 L520,781.3 L525,780.1 L530,779.8 L535,781.5 L540,779.9 L545,780.9 L550,781.1 L555,781.7 L560,780.0 L565,780.2 L570,781.6 L575,780.6 L580,780.9 L585,779.0 L590,780.1 L595,779.5 L600,779.3 L605,780.5 L610,779.9 L615,780.2 L620,781.2 L625,779.2 L630,780.5 L635,780.3 L640,779.3 L645,780.0 L650,780.3 L655,780.4 L660,779.2 L665,779.7 L670,778.9 L675,781.0 L680,781.4 L685,780.4 L690,780.9 L695,779.4 L700,781.5 L705,780.2 L710,780.9 L715,780.8 L720,779.7 L725,780.8 L730,779.2 L735,781.6 L740,781.8 L745,781.7 L750,781.6 L755,780.8 L760,779.1 L765,779.2 L770,779.0 L775,781.4 L780,780.4 L785,780.1 L790,779.6 L795,781.5 L800,780.5 L805,779.2 L810,779.9 L815,781.5 L820,781.1 L825,781.7 L830,780.6 L835,780.9 L840,781.0 L845,779.2 L850,779.6 L855,781.7 L860,779.3 L865,781.0 L870,779.1 L875,778.9 L880,780.9 L885,780.0 L890,780.8 L895,779.8 L900,780.8 L905,781.4 L910,781.6 L915,781.0 L920,779.0 L925,780.0 L930,780.3 L935,781.1 L940,778.9 L945,780.6 L950,780.9 L955,781.4 L960,779.4 L965,779.8 L970,780.1 L975,779.0 L980,781.8 L985,781.1 L990,779.9 L995,780.9 L1000,780.0 L1005,781.6 L1010,779.2 L1015,780.1 L1020,781.3 L1025,780.9 L1030,779.3 L1035,781.8 L1040,781.6 L1045,781.3 L1050,779.2 L1055,781.7 L1060,781.3 L1065,780.6 L1070,779.2 L1075,781.2 L1080,780.8 L1085,780.9 L1090,779.3 L1095,779.7 L1100,779.3 L1105,779.0 L1110,780.7 L1115,779.8 L1120,781.8 L1125,781.3 L1130,780.4 L1135,779.0 L1140,780.2 L1145,780.3 L1150,779.0 L1155,781.6 L1160,781.3 L1165,780.2 L1170,781.1 L1175,780.6 L1180,780.6 L1185,779.3 L1190,781.3 L1195,779.9 L1200,779.0 L1205,780.7 L1210,779.8 L1215,780.3 L1220,780.3 L1225,779.4 L1230,778.9 L1235,780.6 L1240,779.4 L1245,781.5 L1250,780.7 L1255,780.9 L1260,780.5 L1265,781.6 L1270,779.0 L1275,780.5 L1280,779.7 L1285,779.0 L1290,781.4 L1295,780.5 L1300,781.0 L1305,781.0 L1310,779.1 L1315,780.3 L1320,779.9 L1325,778.9 L1330,780.7 L1335,780.9 L1340,780.5 L1345,779.7 L1350,779.8 L1355,780.4 L1360,780.0 L1365,780.9 L1370,779.8 L1375,781.4 L1380,780.6 L1385,780.9 L1390,779.9 L1395,780.0 L1400,781.5 L1405,781.7 L1410,781.1 L1415,781.2 L1420,781.8 L1425,779.2 L1430,779.7 L1435,779.9 L1440,779.8 L1445,779.5 L1450,779.1 L1455,781.3 L1460,780.4 L1465,780.7 L1470,781.3 L1475,779.1 L1480,780.1 L1485,780.2 L1490,779.9 L1495,779.7 L1500,781.7 L1505,779.0 L1510,780.1 L1515,781.3 L1520,781.0 L1525,778.9 L1530,779.1 L1535,779.3 L1540,780.2 L1545,780.1 L1550,781.3 L1555,781.7 L1560,780.5 L1565,779.4 L1570,781.0 L1575,780.9 L1580,781.5 L1585,779.9 L1590,780.6 L1595,781.2 L1600,780.2 L1605,780.3 L1610,780.9 L1615,779.5 L1620,781.0 L1625,780.6 L1630,781.3 L1635,779.2 L1640,781.3 L1645,781.1 L1650,781.0 L1655,781.4 L1660,780.3 L1665,780.1 L1670,779.6 L1675,780.7 L1680,778.8 L1685,780.2 L1690,781.8 L1695,779.8 L1700,779.3 L1705,780.0 L1710,781.0 L1715,781.3 L1720,779.2 L1725,780.3 L1730,781.3 L1735,781.4 L1740,780.9 L1745,779.7 L1750,779.1 L1755,780.0 L1760,779.4 L1765,781.6 L1770,779.1 L1775,779.1 L1780,781.8 L1785,781.1 L1790,780.3 L1795,780.2 L1800,781.5 L1805,780.9 L1810,779.8 L1815,780.0 L1820,781.8 L1825,779.6 L1830,779.1 L1835,778.9 L1840,781.3 L1845,779.3 L1850,780.5 L1855,780.0 L1860,780.4 L1865,781.4 L1870,779.7 L1879,779.4 L1879,790.1 L1871,790.1 L1859,788.4 L1847,788.3 L1835,788.2 L1823,788.8 L1811,789.7 L1799,789.1 L1787,787.5 L1775,788.8 L1763,788.9 L1751,789.5 L1739,789.4 L1727,788.5 L1715,788.5 L1703,790.4 L1691,789.8 L1679,788.9 L1667,788.6 L1655,787.9 L1643,789.0 L1631,789.7 L1619,788.2 L1607,788.3 L1595,789.0 L1583,788.9 L1571,789.9 L1559,789.4 L1547,788.2 L1535,788.7 L1523,789.5 L1511,789.8 L1499,789.3 L1487,788.5 L1475,788.1 L1463,789.2 L1451,789.7 L1439,788.5 L1427,788.6 L1415,789.3 L1403,789.0 L1391,790.0 L1379,789.1 L1367,787.9 L1355,788.9 L1343,790.1 L1331,789.8 L1319,789.3 L1307,788.1 L1295,788.6 L1283,790.1 L1271,789.5 L1259,788.4 L1247,789.0 L1235,788.8 L1223,789.0 L1211,789.7 L1199,788.8 L1187,787.9 L1175,788.9 L1163,789.1 L1151,789.3 L1139,789.6 L1127,788.3 L1115,788.4 L1103,789.6 L1091,789.9 L1079,788.9 L1067,789.0 L1055,788.0 L1043,789.5 L1031,790.1 L1019,788.5 L1007,788.1 L995,789.1 L983,789.3 L971,790.2 L959,789.7 L947,787.6 L935,788.1 L923,789.6 L911,788.9 L899,789.4 L887,788.4 L875,788.5 L863,790.0 L851,789.8 L839,788.5 L827,788.1 L815,789.3 L803,789.2 L791,789.9 L779,788.7 L767,787.6 L755,789.3 L743,789.9 L731,789.3 L719,789.3 L707,787.8 L695,788.3 L683,790.2 L671,789.6 L659,788.6 L647,789.1 L635,788.3 L623,789.6 L611,789.7 L599,789.3 L587,787.9 L575,788.6 L563,789.4 L551,789.2 L539,789.2 L527,788.1 L515,788.1 L503,790.3 L491,789.6 L479,788.4 L467,788.6 L455,788.6 L443,789.0 L431,789.7 L419,788.4 L407,788.0 L395,788.7 L383,789.6 L371,789.4 L359,789.7 L347,787.4 L335,789.0 L323,790.2 L311,789.8 L299,788.5 L287,788.7 L275,787.9 L263,789.4 L251,790.3 L239,788.8 L227,788.4 L215,788.5 L203,788.7 L191,789.9 L179,789.1 L167,787.6 L155,788.6 L143,790.0 L131,789.7 L119,789.0 L107,787.9 L95,788.0 L83,789.9 L71,789.9 L59,788.4 L47,788.5 L35,788.5 Z" fill="#6fc92e"/>
<path d="M35,785.8 L47,786.4 L59,786.8 L71,786.5 L83,787.0 L95,786.1 L107,785.8 L119,786.3 L131,787.2 L143,786.7 L155,786.0 L167,786.6 L179,786.1 L191,786.4 L203,787.1 L215,787.1 L227,786.0 L239,785.9 L251,786.6 L263,786.5 L275,786.8 L287,786.7 L299,786.6 L311,785.3 L323,786.3 L335,786.7 L347,787.3 L359,786.7 L371,786.4 L383,785.9 L395,785.6 L407,786.5 L419,787.5 L431,786.9 L443,785.8 L455,785.9 L467,786.8 L479,786.2 L491,787.2 L503,787.1 L515,785.6 L527,785.8 L539,786.5 L551,786.8 L563,786.8 L575,786.3 L587,786.3 L599,785.6 L611,786.8 L623,787.3 L635,786.7 L647,786.4 L659,786.2 L671,786.1 L683,786.1 L695,786.7 L707,787.4 L719,786.0 L731,786.0 L743,786.6 L755,786.5 L767,786.5 L779,787.0 L791,786.6 L803,785.6 L815,786.1 L827,787.0 L839,786.9 L851,786.8 L863,785.8 L875,786.1 L887,786.5 L899,786.8 L911,787.7 L923,786.7 L935,785.9 L947,786.2 L959,786.9 L971,786.3 L983,787.1 L995,786.5 L1007,786.1 L1019,785.8 L1031,786.9 L1043,787.4 L1055,786.9 L1067,786.4 L1079,785.9 L1091,785.9 L1103,786.5 L1115,787.4 L1127,786.8 L1139,785.7 L1151,786.3 L1163,786.2 L1175,786.4 L1187,787.1 L1199,786.9 L1211,786.0 L1223,785.8 L1235,786.4 L1247,787.4 L1259,786.9 L1271,786.5 L1283,786.1 L1295,785.9 L1307,786.1 L1319,787.0 L1331,787.0 L1343,786.3 L1355,785.7 L1367,786.1 L1379,786.5 L1391,787.1 L1403,787.1 L1415,786.8 L1427,786.1 L1439,786.0 L1451,787.1 L1463,787.0 L1475,786.7 L1487,787.0 L1499,785.8 L1511,786.1 L1523,786.8 L1535,787.0 L1547,786.6 L1559,786.4 L1571,786.4 L1583,786.0 L1595,786.6 L1607,787.1 L1619,786.6 L1631,785.6 L1643,786.1 L1655,786.3 L1667,786.8 L1679,786.6 L1691,786.8 L1703,786.3 L1715,785.6 L1727,786.4 L1739,787.0 L1751,787.2 L1763,786.1 L1775,786.5 L1787,786.4 L1799,786.4 L1811,787.0 L1823,787.1 L1835,786.5 L1847,786.0 L1859,786.7 L1871,786.8 L1879,786.2 L1879,790.5 L1871,789.8 L1859,789.2 L1847,789.0 L1835,789.3 L1823,789.8 L1811,790.6 L1799,789.6 L1787,788.3 L1775,789.5 L1763,790.0 L1751,790.2 L1739,789.8 L1727,788.4 L1715,788.4 L1703,790.8 L1691,790.1 L1679,789.2 L1667,789.4 L1655,788.6 L1643,790.2 L1631,790.5 L1619,788.8 L1607,789.0 L1595,789.8 L1583,789.3 L1571,790.1 L1559,789.6 L1547,788.6 L1535,789.0 L1523,790.1 L1511,790.3 L1499,789.0 L1487,788.8 L1475,788.9 L1463,790.4 L1451,790.9 L1439,788.9 L1427,788.4 L1415,789.1 L1403,789.8 L1391,790.2 L1379,789.2 L1367,788.7 L1355,789.7 L1343,789.7 L1331,789.9 L1319,789.6 L1307,789.0 L1295,788.4 L1283,790.6 L1271,790.0 L1259,789.1 L1247,789.4 L1235,789.0 L1223,789.5 L1211,790.7 L1199,789.6 L1187,788.8 L1175,789.0 L1163,789.5 L1151,789.6 L1139,790.2 L1127,789.0 L1115,789.1 L1103,790.2 L1091,790.1 L1079,788.9 L1067,789.1 L1055,788.6 L1043,789.4 L1031,791.0 L1019,788.9 L1007,789.1 L995,789.0 L983,789.3 L971,790.1 L959,789.6 L947,787.9 L935,789.2 L923,789.9 L911,789.6 L899,789.5 L887,789.3 L875,788.4 L863,789.9 L851,790.4 L839,788.9 L827,789.1 L815,789.2 L803,789.6 L791,790.5 L779,789.1 L767,787.9 L755,789.1 L743,790.4 L731,790.0 L719,790.0 L707,788.8 L695,788.6 L683,790.5 L671,790.1 L659,789.5 L647,789.0 L635,788.7 L623,790.1 L611,790.9 L599,789.8 L587,788.8 L575,789.9 L563,789.9 L551,789.6 L539,789.7 L527,788.2 L515,788.5 L503,790.2 L491,790.0 L479,789.7 L467,788.8 L455,788.8 L443,789.8 L431,791.1 L419,789.0 L407,788.8 L395,789.6 L383,790.2 L371,790.2 L359,790.3 L347,788.3 L335,789.0 L323,790.6 L311,790.0 L299,789.6 L287,788.7 L275,789.1 L263,790.3 L251,790.6 L239,789.0 L227,789.3 L215,789.2 L203,789.4 L191,790.2 L179,789.5 L167,788.3 L155,789.2 L143,789.9 L131,790.3 L119,789.8 L107,788.8 L95,788.6 L83,790.5 L71,790.7 L59,788.8 L47,789.0 L35,789.1 Z" fill="#4e9a24"/>
</g>
<g id="homebtn">
  <circle cx="105.3" cy="76" r="30.2" fill="#e41e2a"/>
  <rect x="113.8" y="58" width="7.5" height="12" fill="#fff"/>
  <path d="M88.5,76.5 L105,63 L121.5,76.5 V95.8 H110.2 V82.5 H100 V95.8 H88.5 Z" fill="#fff"/>
  <path d="M87,73 L105,57.5 L123.5,73" stroke="#fff" stroke-width="3.8" fill="none" stroke-linecap="round" stroke-linejoin="round"/>
  <path d="M89,75.5 L105,61.5 L121,75.5" stroke="#e41e2a" stroke-width="0.7" fill="none"/>
</g>
<g id="pole">
  <rect x="142" y="140" width="167" height="8.5" fill="#cbcbcb"/>
  <rect x="217" y="148" width="16" height="414" fill="#cbcbcb"/>
  <rect x="142" y="222.5" width="167" height="9" fill="#cbcbcb"/>
  <g fill="#c4907e"><circle cx="160.5" cy="144" r="3.2"/><circle cx="196" cy="144" r="3.2"/><circle cx="289.6" cy="144" r="3.2"/></g>
  <g fill="none" stroke="#555" stroke-width="1.8">
    <path d="M172,149 Q320,196 458,138"/>
    <path d="M200,150 Q350,196 478,137"/>
    <path d="M295,150 Q395,196 488,138"/>
    <path d="M161,146 Q175,175 161,203"/>
    <path d="M196,146 Q210,175 196,203"/>
    <path d="M290,146 Q276,175 290,203"/>
    <path d="M163,205 Q176,208 177,222 Q180,238 196,247"/>
    <path d="M198,205 Q224,212 225,247"/>
    <path d="M288,205 Q256,214 254,247"/>
  </g>
  <defs><pattern id="ins" x="0" y="0" width="10" height="3" patternUnits="userSpaceOnUse"><rect width="10" height="3" fill="#c69080"/><rect y="2" width="10" height="1" fill="#a46656"/></pattern></defs>
  <g>
    <rect x="155.5" y="202" width="11" height="19.5" fill="url(#ins)"/><rect x="154.5" y="201" width="13" height="4" rx="1.5" fill="#a77060"/>
    <rect x="191" y="202" width="11" height="19.5" fill="url(#ins)"/><rect x="190" y="201" width="13" height="4" rx="1.5" fill="#a77060"/>
    <rect x="284.5" y="202" width="11" height="19.5" fill="url(#ins)"/><rect x="283.5" y="201" width="13" height="4" rx="1.5" fill="#a77060"/>
    <rect x="191" y="246" width="11" height="17" fill="url(#ins)"/><rect x="190" y="245" width="13" height="4" rx="1.5" fill="#a77060"/>
    <rect x="220" y="246" width="11" height="17" fill="url(#ins)"/><rect x="219" y="245" width="13" height="4" rx="1.5" fill="#a77060"/>
    <rect x="249" y="246" width="11" height="17" fill="url(#ins)"/><rect x="248" y="245" width="13" height="4" rx="1.5" fill="#a77060"/>
  </g>
  <!-- transformer -->
  <rect x="180" y="263" width="91" height="7.5" fill="#b4b4b4"/>
  <rect x="183" y="270.5" width="85" height="43.5" fill="#c6c6c6"/>
  <g fill="#a2a2a2">
    <rect x="186" y="272" width="2" height="40"/><rect x="193" y="272" width="2" height="40"/><rect x="200" y="272" width="2" height="40"/>
    <rect x="207" y="272" width="2" height="40"/><rect x="214" y="272" width="2" height="40"/><rect x="221" y="272" width="2" height="40"/>
    <rect x="228" y="272" width="2" height="40"/><rect x="235" y="272" width="2" height="40"/><rect x="242" y="272" width="2" height="40"/>
    <rect x="249" y="272" width="2" height="40"/><rect x="256" y="272" width="2" height="40"/><rect x="263" y="272" width="2" height="40"/>
  </g>
  <rect x="203" y="279" width="44" height="29" rx="3" fill="#e0e0e0"/>
  <rect x="180" y="314" width="91" height="7" fill="#b4b4b4"/>
  <!-- meter -->
  <rect x="210" y="340.5" width="58" height="13" rx="2" fill="#b9b9bd"/>
  <circle cx="218" cy="346.5" r="2" fill="#444"/><circle cx="260" cy="346.5" r="2" fill="#444"/>
  <path d="M210,352 H268 V406 L258,432.5 H220 L210,406 Z" fill="#bdbdc1"/>
  <path d="M210,401 H268 V408 H210 Z" fill="#a9a9ad"/>
  <rect x="212" y="353" width="54" height="48" rx="1.5" fill="#9fa0a4"/>
  <rect x="213" y="354" width="52" height="46" rx="1" fill="#dfe0e2"/>
  <path d="M244,354 H265 V380 Z" fill="#eceded"/>
  <rect x="218" y="364.5" width="38" height="7.5" fill="#b8b8b8"/>
  <g fill="#f0f0f0"><rect x="219.5" y="366" width="3" height="4.5"/><rect x="224" y="366" width="3" height="4.5"/><rect x="228.5" y="366" width="3" height="4.5"/><rect x="233" y="366" width="3" height="4.5"/><rect x="237.5" y="366" width="3" height="4.5"/><rect x="242" y="366" width="3" height="4.5"/></g>
  <rect x="250" y="365" width="5.5" height="6.5" fill="#e03020"/>
  <rect x="219" y="377" width="40" height="2.5" fill="#9a9a9a" opacity="0.8"/>
  <ellipse cx="227.5" cy="389.5" rx="6.5" ry="4" fill="#4a4e52"/><circle cx="230" cy="389.5" r="1.8" fill="#fff"/>
  <rect x="242" y="388.5" width="16" height="2" fill="#777"/>
</g>
<g id="panel1">
  <defs>
    <g id="ast"><path d="M0,-7.5 V7.5 M-6.5,-3.75 L6.5,3.75 M-6.5,3.75 L6.5,-3.75" stroke="#e8101a" stroke-width="2.8"/></g>
  </defs>
  <!-- cabinet -->
  <rect x="569" y="182" width="241" height="350" fill="#e9e9e9" stroke="#c6c6c6" stroke-width="1"/>
  <rect x="569" y="180.5" width="241" height="7.5" fill="#878787"/>
  <rect x="557.5" y="166.5" width="263.5" height="14" fill="#e6e6e6" stroke="#c4c4c4" stroke-width="1"/>
  <path d="M557.5,180.5 L569,188 V180.5 Z M821,180.5 L810,188 V180.5 Z" fill="#f0f0f0" stroke="#c4c4c4" stroke-width="0.8"/>
  <path d="M569,188 L576.5,200 H801 L810,188" fill="none" stroke="#c9c9c9" stroke-width="1"/>
  <path d="M576.5,200 V525 L569,532 M801,200 V525 L810,532 M576.5,525 H801" fill="none" stroke="#c9c9c9" stroke-width="1.2"/>
  <rect x="576.5" y="200" width="224.5" height="325" fill="none" stroke="#bdbdbd" stroke-width="1.5"/>
  <rect x="580.5" y="204" width="216" height="313" fill="#c9c8cd"/>
  <!-- MCCB -->
  <rect x="582" y="228" width="32" height="11" fill="#2a2a2a"/>
  <circle cx="589" cy="231.5" r="3" fill="#ddd"/><circle cx="606" cy="231.5" r="3" fill="#ddd"/>
  <rect x="583" y="237" width="30" height="44" fill="#e7e4dc"/>
  <rect x="583.5" y="240.5" width="20" height="6" fill="#f4e800"/>
  <text x="593.5" y="245.5" font-size="4.5" font-weight="bold" text-anchor="middle" fill="#222">MCCB</text>
  <rect x="591" y="251" width="8" height="15" fill="#444"/><rect x="593" y="253" width="4" height="6" fill="#1a9a50"/>
  <rect x="582" y="280" width="32" height="10" fill="#262626"/>
  <!-- blue busbar -->
  <rect x="617" y="243.5" width="50" height="26.5" fill="#6c93d9"/>
  <rect x="632" y="243.5" width="19" height="26.5" fill="#5a80c8"/>
  <circle cx="624" cy="257" r="2.5" fill="#aaa"/><circle cx="659" cy="257" r="2.5" fill="#aaa"/>
  <rect x="637" y="244" width="9" height="7" fill="#e6e6ee"/><rect x="637" y="262" width="9" height="7" fill="#e6e6ee"/>
  <rect x="637.5" y="253" width="8" height="7" fill="#f4e800"/>
  <!-- orange relay -->
  <rect x="667" y="235" width="44" height="57" rx="1.5" fill="#f07838"/>
  <g fill="#c85a20"><circle cx="675" cy="243" r="2.2"/><circle cx="682" cy="243" r="2.2"/><circle cx="689" cy="243" r="2.2"/><circle cx="696" cy="243" r="2.2"/><circle cx="703" cy="243" r="2.2"/>
  <circle cx="675" cy="285" r="2.2"/><circle cx="682" cy="285" r="2.2"/><circle cx="689" cy="285" r="2.2"/><circle cx="696" cy="285" r="2.2"/><circle cx="703" cy="285" r="2.2"/>
  <circle cx="679" cy="273" r="2.6"/><circle cx="689" cy="273" r="2.6"/><circle cx="699" cy="273" r="2.6"/></g>
  <rect x="686" y="255" width="17" height="12" fill="#3a1010"/>
  <text x="694.5" y="264.5" font-size="8" font-weight="bold" text-anchor="middle" fill="#e02020">88</text>
  <rect x="695" y="252" width="15" height="4.5" fill="#f4e800"/>
  <g fill="#333"><circle cx="675" cy="256" r="0.9"/><circle cx="675" cy="260" r="0.9"/><circle cx="675" cy="264" r="0.9"/><circle cx="675" cy="268" r="0.9"/></g>
  <!-- fuse -->
  <rect x="714" y="235" width="13.5" height="56" rx="1" fill="#f2f2f2" stroke="#cfcfcf" stroke-width="0.6"/>
  <circle cx="720.7" cy="242" r="2.2" fill="#555"/>
  <rect x="715" y="253" width="11.5" height="10" fill="#ddd"/>
  <rect x="715.5" y="264" width="10.5" height="3.5" fill="#c02818"/>
  <rect x="716.5" y="271" width="8.5" height="6" fill="#f4e800"/>
  <circle cx="720.7" cy="284" r="2" fill="#555"/>
  <!-- timers -->
  <g id="tmr">
    <rect x="727.6" y="232.5" width="33.5" height="8.5" fill="#2c2c2c"/>
    <g fill="#888"><rect x="729" y="233.5" width="4" height="3"/><rect x="735" y="233.5" width="4" height="3"/><rect x="741" y="233.5" width="4" height="3"/><rect x="747" y="233.5" width="4" height="3"/><rect x="753" y="233.5" width="4" height="3"/></g>
    <rect x="728" y="241" width="33" height="45" rx="1.5" fill="#ebe7db"/>
    <rect x="729.5" y="242.5" width="6" height="5.5" fill="#f4e800"/>
    <rect x="737.5" y="244.5" width="14" height="13" fill="#c01818"/>
    <rect x="739" y="246" width="11" height="10" fill="#a01010"/>
    <rect x="735.5" y="260" width="19" height="11" rx="1" fill="#3a3a3a"/>
    <g fill="#ddd"><rect x="737.5" y="262" width="3" height="6"/><rect x="743.5" y="262" width="3" height="6"/></g><rect x="749.5" y="262" width="3" height="6" fill="#e04040"/>
    <rect x="738" y="275.5" width="4" height="4" fill="#e04040"/>
    <rect x="727.6" y="285" width="33.5" height="8.5" fill="#2c2c2c"/>
    <g fill="#b06a30"><circle cx="733" cy="293" r="1.5"/><circle cx="744" cy="293.5" r="1.5"/><circle cx="755" cy="293" r="1.5"/></g>
  </g>
  <use href="#tmr" x="34.4"/>
  <use href="#ast" x="777.4" y="219"/>
  <!-- K1 contactor -->
  <rect x="597" y="337.5" width="17" height="10" fill="#e0dcd2" stroke="#aaa" stroke-width="0.5"/>
  <circle cx="601.5" cy="342" r="2.2" fill="#555"/><circle cx="609.5" cy="342" r="2.2" fill="#555"/>
  <rect x="584" y="347" width="40" height="58" fill="#e8e4da"/>
  <g fill="#3c3c3c"><circle cx="589.5" cy="353.5" r="2.6"/><circle cx="597" cy="353.5" r="2.6"/><circle cx="604.5" cy="353.5" r="2.6"/><circle cx="612" cy="353.5" r="2.6"/><circle cx="619" cy="353.5" r="2.6"/>
  <circle cx="589.5" cy="392" r="2.6"/><circle cx="597" cy="392" r="2.6"/><circle cx="604.5" cy="392" r="2.6"/><circle cx="612" cy="392" r="2.6"/><circle cx="619" cy="392" r="2.6"/></g>
  <rect x="602" y="374" width="4" height="8" fill="#333"/>
  <rect x="612" y="377" width="8" height="6" fill="#f4e800"/>
  <rect x="584" y="398.5" width="40" height="15" fill="#22262e"/>
  <rect x="588" y="406" width="8" height="5" fill="#3a78d0"/><circle cx="608" cy="406" r="5" fill="#d8d0c0"/>
  <rect x="584" y="413.5" width="40" height="20" fill="#e3dfd4"/>
  <g fill="#3c3c3c"><circle cx="591" cy="420" r="2.4"/><circle cx="600" cy="420" r="2.4"/><circle cx="610" cy="420" r="2.4"/><circle cx="591" cy="429" r="2.6"/><circle cx="600" cy="429" r="2.6"/><circle cx="616" cy="429" r="2.6"/></g>
  <rect x="613.5" y="415" width="9" height="6" fill="#f4e800"/>
  <use href="#ast" x="657" y="338"/>
  <!-- franklin box -->
  <path d="M672,324 H700 L703,321.5 H716 L719,324 H766.5 V424 L756,437 H683 L672,424 Z" fill="#b6babd" stroke="#8c9095" stroke-width="1"/>
  <rect x="699.5" y="339" width="41.5" height="47" fill="#1d3b8b"/>
  <path d="M720,344 L737,362.5 L720,381 L703,362.5 Z" fill="#fff"/>
  <circle cx="720" cy="362.5" r="8" fill="#1d3b8b"/>
  <path d="M703,362.5 H737" stroke="#1d3b8b" stroke-width="1.2"/>
  <text x="720" y="367" font-size="10" font-weight="bold" fill="#fff" text-anchor="middle" font-style="italic">FE</text>
  <rect x="699.5" y="386" width="41.5" height="31" fill="#f4f4f4"/>
  <rect x="699.5" y="386" width="41.5" height="3" fill="#e06a20"/>
  <g fill="#777"><rect x="702" y="391" width="36" height="1"/><rect x="702" y="394" width="36" height="1"/><rect x="702" y="397" width="36" height="1"/><rect x="702" y="401" width="36" height="1"/><rect x="702" y="404" width="36" height="1"/><rect x="702" y="407" width="36" height="1"/><rect x="702" y="410" width="30" height="1"/></g>
  <rect x="694" y="427" width="50" height="9" fill="#f6f6f6"/>
  <g fill="#999"><rect x="697" y="429" width="42" height="1"/><rect x="697" y="432" width="42" height="1"/></g>
</g>
<g id="panel2">
  <rect x="829" y="191" width="243" height="341" fill="#e6e6e6" stroke="#cacaca" stroke-width="1"/>
  <rect x="875.5" y="218.5" width="176" height="269.5" rx="22" fill="#c8c7cd" stroke="#858585" stroke-width="11"/>
  <!-- handle -->
  <circle cx="851.3" cy="346.7" r="11.2" fill="none" stroke="#bdc0c0" stroke-width="3.4"/>
  <path d="M845.5,347 Q845,343 851,343 Q859,343 859.5,350 Q859.5,356 858,362 Q856,380 855.5,396 Q855,402 851.5,401.5 Q848.5,400 850,393 Q853,378 851,365 Q848,356 845.5,350 Z" fill="#bdc0c0"/>
  <circle cx="856" cy="350.5" r="1.6" fill="#e6e6e4"/><circle cx="857" cy="355" r="1" fill="#e6e6e4"/>
  <!-- meters -->
  <g id="vm">
    <rect x="907.5" y="241.5" width="52" height="52" rx="3" fill="#2e2e2e"/>
    <rect x="909.5" y="243.5" width="48" height="48" rx="2" fill="#efefef"/>
    <path d="M914,262 Q933.5,248 953,262" fill="none" stroke="#555" stroke-width="0.8"/>
    <path d="M915,259 L925,270" stroke="#e04040" stroke-width="0.8"/>
    <rect x="928" y="266" width="12" height="8" rx="3" fill="#ccc"/>
    <circle cx="913" cy="274" r="1.6" fill="#777"/><circle cx="954" cy="274" r="1.6" fill="#777"/>
    <rect x="911.5" y="274.5" width="44" height="13" fill="#f4e800"/>
  </g>
  <text x="933.5" y="266" font-size="9" font-weight="bold" text-anchor="middle" fill="#333">V</text>
  <text x="933.5" y="285" font-size="6.2" font-weight="bold" text-anchor="middle" fill="#222">VOLTMETER</text>
  <use href="#vm" x="67"/>
  <text x="1000.5" y="266" font-size="9" font-weight="bold" text-anchor="middle" fill="#333">A</text>
  <text x="1000.5" y="285" font-size="6.4" font-weight="bold" text-anchor="middle" fill="#222">AMMETER</text>
  <!-- lamps -->
  <circle cx="905.5" cy="338.5" r="12.5" fill="#2a2a2a"/><circle cx="905.5" cy="338.5" r="10" fill="#e82020"/><rect x="900" y="335.5" width="11" height="6" fill="#f4e800"/>
  <circle cx="945" cy="338.5" r="12.5" fill="#2a2a2a"/><circle cx="945" cy="338.5" r="10" fill="#f2d83a"/><rect x="937" y="335.5" width="16" height="6" fill="#f4e800"/>
  <circle cx="985" cy="338.5" r="12.5" fill="#2a2a2a"/><circle cx="985" cy="338.5" r="10" fill="#2aa8e8"/><rect x="978" y="335.5" width="14" height="6" fill="#f4e800"/>
  <circle cx="1024" cy="338.5" r="12.5" fill="#2a2a2a"/><circle cx="1024" cy="338.5" r="10" fill="#20a040"/><rect x="1019" y="335.5" width="10" height="6" fill="#f4e800"/>
  <ellipse cx="905.5" cy="353.5" rx="6" ry="1.2" fill="#aaa"/>
  <g font-size="3.6" font-weight="bold" fill="#333" text-anchor="middle"><text x="905.5" y="340">OFF</text><text x="945" y="340">OVERLOAD</text><text x="985" y="340">ALARM</text><text x="1024" y="340">RUN</text></g>
  <use href="#ast" x="1048.3" y="336"/>
  <!-- hour meter -->
  <rect x="943.5" y="361.5" width="44" height="43.5" rx="3" fill="#9a9a9a"/>
  <rect x="945.5" y="363.5" width="40" height="39.5" rx="2" fill="#cfcfcf"/>
  <rect x="949" y="367" width="33" height="32" fill="#dcdcdc" stroke="#aaa" stroke-width="0.6"/>
  <circle cx="953" cy="373" r="1.4" fill="#333"/><rect x="970" y="371.5" width="7" height="3" fill="#c8a0a0"/>
  <rect x="951" y="381" width="27" height="5" fill="#444"/>
  <rect x="951" y="389" width="29" height="8" fill="#f4e800"/>
  <text x="965.5" y="395" font-size="4.5" font-weight="bold" text-anchor="middle" fill="#222">HOURMETER</text>
  <use href="#ast" x="997.3" y="370"/>
  <!-- push buttons -->
  <g>
    <rect x="908" y="425" width="25" height="41" rx="2" fill="#dedad0" stroke="#5aa080" stroke-width="0.8"/>
    <g fill="#6a5a40"><rect x="910" y="427" width="5" height="5"/><rect x="926" y="427" width="5" height="5"/><rect x="910" y="459" width="5" height="5"/><rect x="926" y="459" width="5" height="5"/></g>
    <circle cx="920.5" cy="445" r="11" fill="#30a040"/><circle cx="920.5" cy="445" r="8.5" fill="#38b848"/>
    <rect x="911" y="441.5" width="19" height="7" fill="#f4e800"/>
    <text x="920.5" y="447.2" font-size="5" font-weight="bold" text-anchor="middle" fill="#222">START</text>
  </g>
  <g>
    <rect x="955" y="425" width="23.5" height="41" rx="2" fill="#dedad0" stroke="#5aa080" stroke-width="0.8"/>
    <g fill="#6a5a40"><rect x="957" y="427" width="5" height="5"/><rect x="971" y="427" width="5" height="5"/><rect x="957" y="459" width="5" height="5"/><rect x="971" y="459" width="5" height="5"/></g>
    <circle cx="966.5" cy="447" r="11" fill="#c82828"/><circle cx="966.5" cy="447" r="8.5" fill="#e04040"/>
    <rect x="959" y="444" width="15" height="7" fill="#f4e800"/>
    <text x="966.5" y="449.7" font-size="5" font-weight="bold" text-anchor="middle" fill="#222">STOP</text>
  </g>
  <g>
    <rect x="1003" y="423" width="24.5" height="42" rx="2" fill="#e2ded4" stroke="#5aa080" stroke-width="0.8"/>
    <rect x="1009" y="421.5" width="12" height="5" fill="#f4e800"/>
    <circle cx="1015" cy="445" r="11" fill="#222"/>
    <rect x="1012.5" y="433" width="5" height="24" rx="2" fill="#eee"/>
    <rect x="1013.5" y="434" width="3" height="22" fill="#222"/>
    <g fill="#6a5a40"><rect x="1005" y="458" width="5" height="5"/><rect x="1020" y="458" width="5" height="5"/></g>
  </g>
  <use href="#ast" x="899" y="477"/>
  <!-- logo -->
  <rect x="1016" y="499.5" width="52.5" height="29" fill="#8a8f8c"/>
  <path d="M1020,503 H1044 L1040,514 H1020 Z" fill="#d6ef4a"/>
  <path d="M1044,503 H1065 V514 H1040 Z" fill="#3a5aa8"/>
  <text x="1030" y="512" font-size="8" font-weight="bold" fill="#1a3a8a" text-anchor="middle">WP</text>
  <text x="1055" y="512" font-size="8" font-weight="bold" fill="#d6ef4a" text-anchor="middle">ENG</text>
  <rect x="1020" y="517" width="45" height="2" fill="#c8c8c8"/>
  <rect x="1030" y="522" width="25" height="1" fill="#aaa"/>
</g>
<g id="pswitch">
  <use href="#ast" x="1430" y="338"/>
  <rect x="1415" y="520" width="28" height="27" rx="2" fill="#a88850"/>
  <rect x="1419" y="522" width="8" height="24" fill="#c8a868" opacity="0.7"/>
  <path d="M1342,367 L1346,363 H1519 L1523,367 V520 L1519,523 H1346 L1342,520 Z" fill="#c9bea4"/>
  <rect x="1357" y="359" width="6" height="6" fill="#a89878"/><rect x="1388" y="358" width="8" height="7" fill="#a89878"/>
  <defs><linearGradient id="psg" x1="0" y1="0" x2="0" y2="1"><stop offset="0" stop-color="#15181f"/><stop offset="0.45" stop-color="#3a404e"/><stop offset="1" stop-color="#4e5564"/></linearGradient></defs>
  <rect x="1346.5" y="371.5" width="173" height="147" fill="#23262e"/>
  <rect x="1349" y="374" width="168" height="127" fill="url(#psg)"/>
  <rect x="1351.5" y="380" width="57" height="120" fill="#b9b9bd"/>
  <rect x="1378" y="380" width="1.5" height="120" fill="#8a8a90"/>
  <circle cx="1360" cy="389" r="3.2" fill="#ddd" stroke="#777" stroke-width="0.8"/><circle cx="1399" cy="389" r="3.2" fill="#ddd" stroke="#777" stroke-width="0.8"/>
  <rect x="1365.5" y="408" width="4" height="56" fill="#1e1e1e"/>
  <rect x="1391.5" y="412" width="4" height="52" fill="#1e1e1e"/>
  <g fill="#555" font-size="4.5" text-anchor="middle"><text x="1365" y="405">DIFF</text><text x="1394" y="406">MAIN</text></g>
  <g fill="#666"><rect x="1358" y="418" width="4" height="1"/><rect x="1358" y="425" width="4" height="1"/><rect x="1358" y="432" width="4" height="1"/><rect x="1358" y="439" width="4" height="1"/><rect x="1383" y="420" width="5" height="1"/><rect x="1383" y="430" width="5" height="1"/><rect x="1383" y="440" width="5" height="1"/><rect x="1383" y="450" width="5" height="1"/></g>
  <circle cx="1391" cy="487" r="6" fill="#c8c8c8" stroke="#666" stroke-width="1"/>
  <rect x="1413" y="378" width="30" height="25" fill="#b8b9c0"/>
  <circle cx="1432" cy="391" r="6" fill="#d0a840" stroke="#8a6a20" stroke-width="0.8"/>
  <rect x="1413" y="470" width="14" height="14" fill="#6a7080"/>
  <rect x="1451.5" y="390" width="27" height="75" fill="#9a5a36"/>
  <rect x="1446" y="402" width="2" height="78" fill="#9aa0a8"/><rect x="1480" y="405" width="2" height="75" fill="#9aa0a8"/>
  <circle cx="1465" cy="397" r="6.5" fill="#d8b040" stroke="#8a6a20" stroke-width="0.8"/>
  <circle cx="1465" cy="428" r="6.5" fill="#d8b040" stroke="#8a6a20" stroke-width="0.8"/>
  <circle cx="1465" cy="458" r="6.5" fill="#d8b040" stroke="#8a6a20" stroke-width="0.8"/>
  <rect x="1454" y="466" width="22" height="16" fill="#9a9ea6"/><rect x="1459" y="469" width="11" height="9" rx="4" fill="#222"/>
  <rect x="1444" y="476" width="40" height="2" fill="#a8acb4"/>
  <rect x="1348" y="500" width="56" height="18.5" fill="#d83a3a"/>
  <rect x="1404" y="500" width="109" height="18.5" fill="#e9e4e2"/>
  <text x="1376" y="512.5" font-size="8.2" font-weight="bold" fill="#fff" text-anchor="middle">Honeywell</text>
  <text x="1459" y="512.5" font-size="7.2" fill="#e06060" text-anchor="middle">PRESSURETROL</text>
</g>
<g id="well">
  <defs>
    <pattern id="brick" x="739" y="774" width="34" height="6.5" patternUnits="userSpaceOnUse">
      <rect width="34" height="6.5" fill="#e9e0d6"/>
      <rect x="0.5" y="0.5" width="16" height="5.5" fill="#d4643c"/>
      <rect x="17.5" y="0.5" width="16" height="5.5" fill="#cf5c36"/>
    </pattern>
    <pattern id="brick2" x="731" y="780.5" width="34" height="6.5" patternUnits="userSpaceOnUse">
      <rect width="34" height="6.5" fill="#e9e0d6"/>
      <rect x="0.5" y="0.5" width="16" height="5.5" fill="#d86a40"/>
      <rect x="17.5" y="0.5" width="16" height="5.5" fill="#c85a38"/>
    </pattern>
  </defs>
  <rect x="781" y="790" width="75" height="134" fill="#a95b57"/>
  <g fill="#96504c"><rect x="781" y="818" width="75" height="0.8"/><rect x="781" y="848" width="75" height="0.8"/><rect x="781" y="862" width="75" height="0.8"/></g>
  <path d="M781,883 Q790,878 799,883 T817,883 T835,883 T856,883 V924 H781 Z" fill="#a9dff2"/>
  <path d="M781,894 Q790,889 799,894 T817,894 T835,894 T856,894 V924 H781 Z" fill="#0cc6f6"/>
  <path d="M781,905 Q790,900 799,905 T817,905 T835,905 T856,905 V924 H781 Z" fill="#0b92f2"/>
  <rect x="812.5" y="793" width="9.5" height="119" fill="#6d6378"/>
  <rect x="814.5" y="793" width="5" height="119" fill="#857b92"/>
  <rect x="739" y="774" width="155" height="6.5" fill="url(#brick)"/>
  <rect x="739" y="780.5" width="155" height="6.5" fill="url(#brick2)"/>
  <rect x="739" y="787" width="155" height="6.5" fill="url(#brick)"/>
  <g stroke="#a8c860" stroke-width="1" opacity="0.8">
    <path d="M735,794 L740,789 M745,794 L747,787 M760,794 L763,788 M790,794 L792,787 M805,794 L808,789 M840,794 L843,787 M870,794 L872,788 M885,794 L889,789 M898,794 L902,790"/>
  </g>
  <path d="M833,761 H855 L852,774 H836 Z" fill="#2352d0"/>
  <rect x="833" y="761" width="22" height="2.5" fill="#3a6af0"/>
</g>
<g id="tower">
  <rect x="1621.5" y="620" width="166" height="55" fill="#dfe5f8"/>
  <path d="M1599,136.7 L1591,173.5" stroke="#555" stroke-width="1.2"/>
  <rect x="1631" y="151" width="33.5" height="22" fill="#2a3a8e"/>
  <path d="M1652,152 L1662,154 L1664,168 L1655,170 Z" fill="#3a4aa6"/>
  <g stroke="#26368a" stroke-width="1.4" fill="none">
    <ellipse cx="1648" cy="149.5" rx="30" ry="2.6"/>
    <path d="M1618.5,149.5 V171 M1627,151.5 V172 M1639,152 V172 M1657,152 V172 M1669,151.5 V172 M1677.5,149.5 V171"/>
  </g>
  <defs>
    <linearGradient id="cone" x1="0" y1="0" x2="1" y2="0"><stop offset="0" stop-color="#2b3f9c"/><stop offset="0.5" stop-color="#2c3f9e"/><stop offset="1" stop-color="#26388e"/></linearGradient>
    <radialGradient id="under" cx="1648" cy="250" r="90" gradientUnits="userSpaceOnUse"><stop offset="0" stop-color="#10153a"/><stop offset="0.55" stop-color="#1c2668"/><stop offset="1" stop-color="#2a3a94"/></radialGradient>
  </defs>
  <path d="M1584,175.5 Q1648,169 1710,175.5 L1736,218 Q1741,225 1739,227 Q1736,232 1720,234 Q1648,244 1576,234 Q1560,232 1557,227 Q1555,225 1560,218 Z" fill="url(#cone)"/>
  <path d="M1560,230 Q1648,219 1737,230 Q1735,236 1722,240 Q1700,248 1690,252 Q1680,256 1676,263 H1617 Q1612,256 1604,252 Q1592,248 1574,240 Q1562,236 1560,230 Z" fill="url(#under)"/>
  <path d="M1565,228 Q1648,217 1733,228" stroke="#3a4cae" stroke-width="1.2" fill="none" opacity="0.6"/>
  <path d="M1616.7,250 H1675.5 Q1668.5,280 1668.5,339 H1627.5 Q1627.5,280 1616.7,250 Z" fill="#f6c412"/>
  <path d="M1616.7,250 L1633,273 L1642,250 Z M1663,250 L1669,271 L1675.5,254 Z" fill="#151c50"/>
  <rect x="1627.5" y="336" width="41" height="339" fill="#f6c412"/>
  <rect x="1633" y="280" width="5" height="395" fill="#ffe04a" opacity="0.8"/>
  <rect x="1648" y="340" width="6" height="335" fill="#9a7414"/><rect x="1662" y="340" width="6" height="335" fill="#7a5c18"/>
  <path d="M1635,675 H1668 L1681,719 H1613 Z" fill="#f8c030"/>
  <rect x="1584" y="719" width="140" height="68" fill="#777"/>
  <!-- wires in tower -->
  <path d="M1655,181 V706 Q1655,716 1665,717 H1714 Q1725,718 1725,729 V757" fill="none" stroke="#f08c4c" stroke-width="4"/>
  <path d="M1660.5,181 V708 Q1660,717 1669,717 H1697 Q1706,717 1706,726 V766 Q1706,775 1715,775 H1879" fill="none" stroke="#1ab0ee" stroke-width="5"/>
  <path d="M1633,185 V181 Q1633,178 1637,178 H1641 Q1645,178 1645,183 V714 Q1645,722 1637,722 H826" fill="none" stroke="#1a9ab8" stroke-width="5.8"/>
</g>
<g id="pump">
  <!-- pump -->
  <rect x="812.5" y="720" width="7.5" height="55" fill="#1a9ab8"/>
  <circle cx="825" cy="710" r="17" fill="#16b8c4"/>
  <path d="M811,664 Q811,655 817,653 L821,651 Q823,649 826,649 H828 Q830,649 830,652 V660 Q830,662 828,662 H826 V684 H811 Z" fill="#e2702a"/>
  <rect x="813" y="657" width="3" height="25" fill="#f29a5a" opacity="0.7"/>
  <path d="M810,680 H827 V688 L822,694 H815 L810,688 Z" fill="#1c1c1c"/>
  <rect x="814" y="693" width="8" height="4" fill="#333"/>
  <!-- red solenoid + fitting -->
  <rect x="904.5" y="694" width="24.5" height="17" fill="#c00012"/>
  <rect x="913" y="711" width="7" height="6" fill="#4a7ae8"/>
  <rect x="910" y="717.5" width="16" height="9" fill="#6a90f0"/>
  <rect x="902" y="715.5" width="9" height="13" rx="1.5" fill="#3a6ae0"/>
  <rect x="925" y="715.5" width="9.5" height="13" rx="1.5" fill="#3a6ae0"/>
  <!-- cursor -->
  <path d="M806,699.5 H817 M812.5,694.5 L818,699.5 L812.5,704.5" fill="none" stroke="#fff" stroke-width="3.2"/>
  <path d="M806,699.5 H817 M812.5,694.5 L818,699.5 L812.5,704.5" fill="none" stroke="#111" stroke-width="1.5"/>
</g>
<g id="wires" fill="none">
  <!-- meter wires -->
  <path d="M231.6,432 V549 Q231.6,557.5 240,557.5 H650 Q665,557.5 665,542 V517" fill="none" stroke="#1ab4ec" stroke-width="4.3"/>
  <path d="M239,432 V541 Q239,549 247,549 H643 Q654,549 654,538 V517" fill="none" stroke="#8b2323" stroke-width="3.8"/>
  <!-- green dashed -->
  <path d="M410,957 V580 Q410,567.5 422,567.5 H664 Q676,567.5 676,556 V517" stroke="#3cc384" stroke-width="2" stroke-dasharray="5,3"/>
  <path d="M410,790 V957" stroke="#d9b4a0" stroke-width="2"/>
  <path d="M410,915 V957" stroke="#8a5a40" stroke-width="2"/>
  <!-- orange -->
  <path d="M767,517 V551 Q767,563 779,563 H1414 Q1425,563 1425,552 V408 Q1425,398 1435,398 H1450" stroke="#f08c4c" stroke-width="3"/>
  <path d="M756,517 V564 Q756,576 768,576 H1422 Q1434,576 1434,564 V470 Q1434,460 1444,460 H1452" stroke="#f08c4c" stroke-width="3"/>
  <!-- red -->
  <path d="M744,517 V571 Q744,626 799,626 H880 Q917,626 917,663 V694" stroke="#e8342c" stroke-width="3"/>
  <path d="M733,517 V575 Q733,634.5 792,634.5 H880 Q914,634.5 914,666 V694" stroke="#e8342c" stroke-width="3"/>
  <path d="M723,517 V579 Q723,640.5 784,640.5 H880 Q911,640.5 911,670 V694" stroke="#e8342c" stroke-width="3"/>
  <!-- wires into gray cable -->
  <path d="M688,517 V528 Q688,534 694,536 Q698,538 698,542" stroke="#8b2323" stroke-width="3.5"/>
  <path d="M699,517 V545" stroke="#1ab4ec" stroke-width="3.5"/>
  <path d="M710,517 V527 Q710,534 704,536 Q699,538 699,542" stroke="#3cc384" stroke-width="2" stroke-dasharray="4,2"/>
  <!-- gray cables -->
  <defs>
    <linearGradient id="cabA" gradientUnits="userSpaceOnUse" x1="505" y1="0" x2="705" y2="0"><stop offset="0" stop-color="#676767"/><stop offset="1" stop-color="#4b4b4b"/></linearGradient>
    <linearGradient id="cabB" gradientUnits="userSpaceOnUse" x1="0" y1="460" x2="0" y2="775"><stop offset="0" stop-color="#4e4e4e"/><stop offset="0.7" stop-color="#454545"/><stop offset="1" stop-color="#606060"/></linearGradient>
  </defs>
  <path d="M705,436 V439 Q705,445 699,445 H528 Q512.5,445 512.5,461 V580 Q512.5,595.5 528,595.5 H681 Q697,595.5 697,580 V540" stroke="url(#cabA)" stroke-width="10.5"/>
  <path d="M739,436 V449 Q739,464 724,464 H598 Q582,464 582,480 V699 Q582,715 598,715 H750 Q767,715 767,731 V744 Q767,760 783,760 H802 Q817.5,760 817.5,774" stroke="url(#cabB)" stroke-width="10.5"/>
  <use href="#ast" x="694" y="712"/>
</g>
<g id="terminal">
  <g fill="#e8c838"><rect x="1444" y="394" width="14" height="6" rx="2"/><rect x="1446" y="455" width="14" height="6" rx="2"/></g>

  <rect x="636" y="472" width="146" height="34" fill="#1b1b1b"/>
  <rect x="636" y="474" width="5" height="31" fill="#e6e6e6"/><rect x="777" y="474" width="5" height="31" fill="#e6e6e6"/>
  <rect x="641" y="476" width="8" height="28" fill="#333"/>
  <g id="tm">
    <rect x="649.5" y="474" width="9.5" height="30" fill="#2a2a2a"/>
    <circle cx="654.3" cy="480.5" r="3.6" fill="#c8ccd0"/><path d="M652,480.5 H656.6" stroke="#777" stroke-width="0.8"/>
    <rect x="650.5" y="487" width="7.5" height="6.5" fill="#111"/>
    <circle cx="654.3" cy="498.5" r="3.6" fill="#c8ccd0"/><path d="M652,498.5 H656.6" stroke="#777" stroke-width="0.8"/>
  </g>
  <use href="#tm" x="11.3"/><use href="#tm" x="22.6"/><use href="#tm" x="33.9"/><use href="#tm" x="45.2"/><use href="#tm" x="56.5"/>
  <use href="#tm" x="67.8"/><use href="#tm" x="79.1"/><use href="#tm" x="90.4"/><use href="#tm" x="101.7"/><use href="#tm" x="113"/>
  <g fill="#e08a3a" font-size="5" text-anchor="middle" font-weight="bold"><text x="654.3" y="492.5">L</text><text x="665.6" y="492.5">N</text><text x="676.9" y="492.5">PE</text><text x="688.2" y="492.5">U</text><text x="699.5" y="492.5">V</text><text x="710.8" y="492.5">PE</text></g>
  <g fill="#fff" font-size="5" text-anchor="middle" font-weight="bold"><text x="722.1" y="492.5">8</text><text x="733.4" y="492.5">12</text><text x="744.7" y="492.5">10</text><text x="756" y="492.5">9</text><text x="767.3" y="492.5">8</text></g>
  <g fill="#e8c020"><rect x="651" y="506" width="6.6" height="11" rx="1"/><rect x="662.3" y="506" width="6.6" height="11" rx="1"/><rect x="673.6" y="506" width="6.6" height="11" rx="1"/><rect x="684.9" y="506" width="6.6" height="11" rx="1"/><rect x="696.2" y="506" width="6.6" height="11" rx="1"/><rect x="707.5" y="506" width="6.6" height="11" rx="1"/></g>
  <g fill="#151515"><rect x="719.3" y="506" width="5.6" height="11" rx="1"/><rect x="730.6" y="506" width="5.6" height="11" rx="1"/><rect x="741.9" y="506" width="5.6" height="11" rx="1"/></g>
  <g fill="#2050c0"><rect x="753.2" y="506" width="5.6" height="11" rx="1"/><rect x="764.5" y="506" width="5.6" height="11" rx="1"/></g>
</g>
<g id="sign">
  <rect x="76" y="680" width="11.5" height="107" fill="#b9b9b9"/><rect x="76" y="680" width="2" height="107" fill="#8a8a8a"/><rect x="85.5" y="680" width="2" height="107" fill="#8a8a8a"/>
  <rect x="221" y="680" width="11.5" height="107" fill="#b9b9b9"/><rect x="221" y="680" width="2" height="107" fill="#8a8a8a"/><rect x="230.5" y="680" width="2" height="107" fill="#8a8a8a"/>
  <rect x="50.3" y="593.6" width="205.6" height="86" rx="15" fill="#fff" stroke="#2a9a40" stroke-width="5.4"/>
  <rect x="58.2" y="603.2" width="128.8" height="64.8" fill="#161616"/>
  <path d="M70.5,606.7 H134 L110,642.4 H64.6 V612.5 Z" fill="#c8ec18"/>
  <path d="M137,606.7 H182.4 V636 L178,643.6 H115 Z" fill="#1a4a9e"/>
  <text x="74" y="633.8" font-size="23" font-weight="bold" fill="#123c8c" textLength="37.5" lengthAdjust="spacingAndGlyphs" stroke="#123c8c" stroke-width="0.8">WP</text>
  <path d="M112,610 H121 L127,620 L133,610 H140 L131,625 L140,641 H131 L125,631 L119,641 H110 L120,625 Z" fill="#161616"/>
  <text x="135" y="633.8" font-size="23" font-weight="bold" fill="#c8ec18" textLength="45.6" lengthAdjust="spacingAndGlyphs" stroke="#c8ec18" stroke-width="0.6">ENG</text>
  <text x="64.6" y="656.6" font-size="9" fill="#d8d8d8" textLength="116.6" lengthAdjust="spacingAndGlyphs">WICHPHOL ENGINEERING</text>
  <rect x="93" y="663" width="51" height="2.2" fill="#bbb" opacity="0.7"/>
  <g fill="#111"><rect x="195.3" y="610.2" width="12.0" height="1.8"/><rect x="208.9" y="610.2" width="3.5" height="1.8"/><rect x="214.0" y="610.2" width="1.8" height="1.8"/><rect x="217.4" y="610.2" width="1.8" height="1.8"/><rect x="220.7" y="610.2" width="1.8" height="1.8"/><rect x="225.8" y="610.2" width="1.8" height="1.8"/><rect x="232.6" y="610.2" width="12.0" height="1.8"/><rect x="195.3" y="611.9" width="1.8" height="1.8"/><rect x="205.5" y="611.9" width="1.8" height="1.8"/><rect x="208.9" y="611.9" width="5.2" height="1.8"/><rect x="215.7" y="611.9" width="1.8" height="1.8"/><rect x="219.1" y="611.9" width="6.9" height="1.8"/><rect x="232.6" y="611.9" width="1.8" height="1.8"/><rect x="242.8" y="611.9" width="1.8" height="1.8"/><rect x="195.3" y="613.6" width="1.8" height="1.8"/><rect x="198.7" y="613.6" width="5.2" height="1.8"/><rect x="205.5" y="613.6" width="1.8" height="1.8"/><rect x="212.3" y="613.6" width="1.8" height="1.8"/><rect x="215.7" y="613.6" width="5.2" height="1.8"/><rect x="224.1" y="613.6" width="1.8" height="1.8"/><rect x="227.5" y="613.6" width="1.8" height="1.8"/><rect x="232.6" y="613.6" width="1.8" height="1.8"/><rect x="236.0" y="613.6" width="5.2" height="1.8"/><rect x="242.8" y="613.6" width="1.8" height="1.8"/><rect x="195.3" y="615.3" width="1.8" height="1.8"/><rect x="198.7" y="615.3" width="5.2" height="1.8"/><rect x="205.5" y="615.3" width="1.8" height="1.8"/><rect x="212.3" y="615.3" width="5.2" height="1.8"/><rect x="225.8" y="615.3" width="3.5" height="1.8"/><rect x="232.6" y="615.3" width="1.8" height="1.8"/><rect x="236.0" y="615.3" width="5.2" height="1.8"/><rect x="242.8" y="615.3" width="1.8" height="1.8"/><rect x="195.3" y="617.0" width="1.8" height="1.8"/><rect x="198.7" y="617.0" width="5.2" height="1.8"/><rect x="205.5" y="617.0" width="1.8" height="1.8"/><rect x="212.3" y="617.0" width="3.5" height="1.8"/><rect x="219.1" y="617.0" width="3.5" height="1.8"/><rect x="224.1" y="617.0" width="6.9" height="1.8"/><rect x="232.6" y="617.0" width="1.8" height="1.8"/><rect x="236.0" y="617.0" width="5.2" height="1.8"/><rect x="242.8" y="617.0" width="1.8" height="1.8"/><rect x="195.3" y="618.7" width="1.8" height="1.8"/><rect x="205.5" y="618.7" width="1.8" height="1.8"/><rect x="208.9" y="618.7" width="1.8" height="1.8"/><rect x="212.3" y="618.7" width="1.8" height="1.8"/><rect x="215.7" y="618.7" width="3.5" height="1.8"/><rect x="222.4" y="618.7" width="8.6" height="1.8"/><rect x="232.6" y="618.7" width="1.8" height="1.8"/><rect x="242.8" y="618.7" width="1.8" height="1.8"/><rect x="195.3" y="620.4" width="12.0" height="1.8"/><rect x="210.6" y="620.4" width="3.5" height="1.8"/><rect x="219.1" y="620.4" width="1.8" height="1.8"/><rect x="224.1" y="620.4" width="1.8" height="1.8"/><rect x="232.6" y="620.4" width="12.0" height="1.8"/><rect x="210.6" y="622.1" width="3.5" height="1.8"/><rect x="215.7" y="622.1" width="3.5" height="1.8"/><rect x="222.4" y="622.1" width="3.5" height="1.8"/><rect x="227.5" y="622.1" width="1.8" height="1.8"/><rect x="197.0" y="623.8" width="1.8" height="1.8"/><rect x="202.1" y="623.8" width="10.3" height="1.8"/><rect x="214.0" y="623.8" width="8.6" height="1.8"/><rect x="225.8" y="623.8" width="8.6" height="1.8"/><rect x="237.7" y="623.8" width="6.9" height="1.8"/><rect x="198.7" y="625.5" width="6.9" height="1.8"/><rect x="208.9" y="625.5" width="1.8" height="1.8"/><rect x="214.0" y="625.5" width="5.2" height="1.8"/><rect x="220.7" y="625.5" width="1.8" height="1.8"/><rect x="224.1" y="625.5" width="5.2" height="1.8"/><rect x="230.9" y="625.5" width="5.2" height="1.8"/><rect x="239.4" y="625.5" width="1.8" height="1.8"/><rect x="195.3" y="627.2" width="5.2" height="1.8"/><rect x="212.3" y="627.2" width="1.8" height="1.8"/><rect x="215.7" y="627.2" width="3.5" height="1.8"/><rect x="220.7" y="627.2" width="5.2" height="1.8"/><rect x="227.5" y="627.2" width="3.5" height="1.8"/><rect x="232.6" y="627.2" width="1.8" height="1.8"/><rect x="195.3" y="628.9" width="1.8" height="1.8"/><rect x="198.7" y="628.9" width="1.8" height="1.8"/><rect x="202.1" y="628.9" width="1.8" height="1.8"/><rect x="207.2" y="628.9" width="3.5" height="1.8"/><rect x="214.0" y="628.9" width="5.2" height="1.8"/><rect x="222.4" y="628.9" width="12.0" height="1.8"/><rect x="236.0" y="628.9" width="1.8" height="1.8"/><rect x="239.4" y="628.9" width="1.8" height="1.8"/><rect x="197.0" y="630.6" width="3.5" height="1.8"/><rect x="203.8" y="630.6" width="3.5" height="1.8"/><rect x="210.6" y="630.6" width="3.5" height="1.8"/><rect x="215.7" y="630.6" width="5.2" height="1.8"/><rect x="222.4" y="630.6" width="3.5" height="1.8"/><rect x="229.2" y="630.6" width="1.8" height="1.8"/><rect x="232.6" y="630.6" width="1.8" height="1.8"/><rect x="237.7" y="630.6" width="6.9" height="1.8"/><rect x="195.3" y="632.3" width="6.9" height="1.8"/><rect x="203.8" y="632.3" width="1.8" height="1.8"/><rect x="207.2" y="632.3" width="1.8" height="1.8"/><rect x="210.6" y="632.3" width="1.8" height="1.8"/><rect x="217.4" y="632.3" width="1.8" height="1.8"/><rect x="222.4" y="632.3" width="1.8" height="1.8"/><rect x="227.5" y="632.3" width="5.2" height="1.8"/><rect x="239.4" y="632.3" width="5.2" height="1.8"/><rect x="195.3" y="634.0" width="1.8" height="1.8"/><rect x="202.1" y="634.0" width="1.8" height="1.8"/><rect x="205.5" y="634.0" width="3.5" height="1.8"/><rect x="210.6" y="634.0" width="3.5" height="1.8"/><rect x="215.7" y="634.0" width="3.5" height="1.8"/><rect x="222.4" y="634.0" width="8.6" height="1.8"/><rect x="234.3" y="634.0" width="6.9" height="1.8"/><rect x="242.8" y="634.0" width="1.8" height="1.8"/><rect x="198.7" y="635.6" width="1.8" height="1.8"/><rect x="202.1" y="635.6" width="1.8" height="1.8"/><rect x="207.2" y="635.6" width="1.8" height="1.8"/><rect x="214.0" y="635.6" width="1.8" height="1.8"/><rect x="220.7" y="635.6" width="6.9" height="1.8"/><rect x="232.6" y="635.6" width="1.8" height="1.8"/><rect x="237.7" y="635.6" width="1.8" height="1.8"/><rect x="242.8" y="635.6" width="1.8" height="1.8"/><rect x="197.0" y="637.3" width="3.5" height="1.8"/><rect x="207.2" y="637.3" width="6.9" height="1.8"/><rect x="217.4" y="637.3" width="1.8" height="1.8"/><rect x="220.7" y="637.3" width="5.2" height="1.8"/><rect x="227.5" y="637.3" width="5.2" height="1.8"/><rect x="234.3" y="637.3" width="6.9" height="1.8"/><rect x="242.8" y="637.3" width="1.8" height="1.8"/><rect x="197.0" y="639.0" width="6.9" height="1.8"/><rect x="207.2" y="639.0" width="5.2" height="1.8"/><rect x="219.1" y="639.0" width="6.9" height="1.8"/><rect x="227.5" y="639.0" width="3.5" height="1.8"/><rect x="232.6" y="639.0" width="1.8" height="1.8"/><rect x="239.4" y="639.0" width="1.8" height="1.8"/><rect x="200.4" y="640.7" width="1.8" height="1.8"/><rect x="203.8" y="640.7" width="1.8" height="1.8"/><rect x="208.9" y="640.7" width="1.8" height="1.8"/><rect x="214.0" y="640.7" width="12.0" height="1.8"/><rect x="227.5" y="640.7" width="1.8" height="1.8"/><rect x="234.3" y="640.7" width="1.8" height="1.8"/><rect x="239.4" y="640.7" width="5.2" height="1.8"/><rect x="195.3" y="642.4" width="3.5" height="1.8"/><rect x="200.4" y="642.4" width="1.8" height="1.8"/><rect x="205.5" y="642.4" width="1.8" height="1.8"/><rect x="215.7" y="642.4" width="1.8" height="1.8"/><rect x="222.4" y="642.4" width="1.8" height="1.8"/><rect x="225.8" y="642.4" width="12.0" height="1.8"/><rect x="239.4" y="642.4" width="3.5" height="1.8"/><rect x="195.3" y="644.1" width="3.5" height="1.8"/><rect x="200.4" y="644.1" width="3.5" height="1.8"/><rect x="207.2" y="644.1" width="5.2" height="1.8"/><rect x="214.0" y="644.1" width="5.2" height="1.8"/><rect x="220.7" y="644.1" width="23.9" height="1.8"/><rect x="208.9" y="645.8" width="5.2" height="1.8"/><rect x="215.7" y="645.8" width="5.2" height="1.8"/><rect x="222.4" y="645.8" width="1.8" height="1.8"/><rect x="225.8" y="645.8" width="1.8" height="1.8"/><rect x="229.2" y="645.8" width="5.2" height="1.8"/><rect x="237.7" y="645.8" width="3.5" height="1.8"/><rect x="195.3" y="647.5" width="12.0" height="1.8"/><rect x="210.6" y="647.5" width="1.8" height="1.8"/><rect x="214.0" y="647.5" width="1.8" height="1.8"/><rect x="220.7" y="647.5" width="3.5" height="1.8"/><rect x="227.5" y="647.5" width="3.5" height="1.8"/><rect x="232.6" y="647.5" width="5.2" height="1.8"/><rect x="241.1" y="647.5" width="1.8" height="1.8"/><rect x="195.3" y="649.2" width="1.8" height="1.8"/><rect x="205.5" y="649.2" width="1.8" height="1.8"/><rect x="208.9" y="649.2" width="5.2" height="1.8"/><rect x="219.1" y="649.2" width="5.2" height="1.8"/><rect x="225.8" y="649.2" width="3.5" height="1.8"/><rect x="232.6" y="649.2" width="3.5" height="1.8"/><rect x="242.8" y="649.2" width="1.8" height="1.8"/><rect x="195.3" y="650.9" width="1.8" height="1.8"/><rect x="198.7" y="650.9" width="5.2" height="1.8"/><rect x="205.5" y="650.9" width="1.8" height="1.8"/><rect x="210.6" y="650.9" width="3.5" height="1.8"/><rect x="215.7" y="650.9" width="5.2" height="1.8"/><rect x="224.1" y="650.9" width="3.5" height="1.8"/><rect x="229.2" y="650.9" width="1.8" height="1.8"/><rect x="232.6" y="650.9" width="1.8" height="1.8"/><rect x="239.4" y="650.9" width="5.2" height="1.8"/><rect x="195.3" y="652.6" width="1.8" height="1.8"/><rect x="198.7" y="652.6" width="5.2" height="1.8"/><rect x="205.5" y="652.6" width="1.8" height="1.8"/><rect x="208.9" y="652.6" width="3.5" height="1.8"/><rect x="220.7" y="652.6" width="1.8" height="1.8"/><rect x="224.1" y="652.6" width="3.5" height="1.8"/><rect x="232.6" y="652.6" width="5.2" height="1.8"/><rect x="239.4" y="652.6" width="5.2" height="1.8"/><rect x="195.3" y="654.3" width="1.8" height="1.8"/><rect x="198.7" y="654.3" width="5.2" height="1.8"/><rect x="205.5" y="654.3" width="1.8" height="1.8"/><rect x="210.6" y="654.3" width="8.6" height="1.8"/><rect x="229.2" y="654.3" width="3.5" height="1.8"/><rect x="237.7" y="654.3" width="1.8" height="1.8"/><rect x="241.1" y="654.3" width="1.8" height="1.8"/><rect x="195.3" y="656.0" width="1.8" height="1.8"/><rect x="205.5" y="656.0" width="1.8" height="1.8"/><rect x="210.6" y="656.0" width="1.8" height="1.8"/><rect x="214.0" y="656.0" width="5.2" height="1.8"/><rect x="222.4" y="656.0" width="10.3" height="1.8"/><rect x="241.1" y="656.0" width="3.5" height="1.8"/><rect x="195.3" y="657.7" width="12.0" height="1.8"/><rect x="212.3" y="657.7" width="3.5" height="1.8"/><rect x="217.4" y="657.7" width="12.0" height="1.8"/><rect x="230.9" y="657.7" width="1.8" height="1.8"/><rect x="237.7" y="657.7" width="6.9" height="1.8"/></g>
  <rect x="214" y="629.5" width="10" height="10" rx="2.5" fill="#4cc070"/>
</g>
<g id="worker">
  <path d="M329,740 H338 L337,771 H329 Z M310,740 H320 L319,771 H311 Z" fill="#4a7ac2"/>
  <path d="M309.5,739 H338 V748 H309.5 Z" fill="#4a7ac2"/>
  <ellipse cx="314" cy="773.5" rx="6" ry="3.5" fill="#3a1a10"/><ellipse cx="335" cy="773.5" rx="6" ry="3.5" fill="#3a1a10"/>
  <path d="M307,705 Q324,698 341,705 L341,739 H307 Z" fill="#ffffff"/>
  <path d="M307,706 L318,704 L324,727 L330,704 L341,706 V739 H307 Z" fill="#e8892a"/>
  <rect x="307" y="732" width="34" height="1.6" fill="#2a3a30"/><rect x="312" y="705" width="2.5" height="33" fill="#f6c080" opacity="0.7"/><rect x="334" y="705" width="2.5" height="33" fill="#f6c080" opacity="0.7"/>
  <path d="M341,708 Q352,728 363,712 L367,715 Q353,740 339,722 Z" fill="#f2f2f2"/>
  <ellipse cx="368" cy="712.5" rx="4.5" ry="3.5" fill="#f6c8a6"/>
  <path d="M308,714 Q312,732 326,718 L330,722 Q314,742 305,722 Z" fill="#f2f2f2"/>
  <ellipse cx="296.5" cy="684" rx="4.5" ry="6" fill="#f6c8a6"/><ellipse cx="354.5" cy="684" rx="4.5" ry="6" fill="#f6c8a6"/>
  <path d="M298,672 H353 V688 Q353,703 325.5,703 Q298,703 298,688 Z" fill="#f6d3b5"/>
  <path d="M298,672 H306 V684 L301,692 H298 Z M345,672 H353 V692 H349 L345,684 Z" fill="#4a2a1a"/>
  <path d="M305,690 Q310,703 325.5,703 Q341,703 346,690 Q342,697 325.5,699 Q309,697 305,690 Z" fill="#5a3420"/>
  <path d="M314,690 Q325.5,703 337,690 Z" fill="#c01c40"/>
  <circle cx="315" cy="684" r="1.8" fill="#2a1a10"/><circle cx="336" cy="684" r="1.8" fill="#2a1a10"/>
  <path d="M311,677 Q315,674 319,677 M332,677 Q336,674 340,677" stroke="#2a1a10" stroke-width="1" fill="none"/>
  <path d="M291,668 Q291,627 326,627 Q361,627 361,668 Q362,673 353,673 H299 Q290,673 291,668 Z" fill="#f5b41e"/>
  <path d="M318,628 Q326,626 334,628 L333,667 H319 Z" fill="#f8cc3a"/>
  <path d="M291,667 Q326,661 361,667 Q362,673 356,673 H297 Q290,673 291,667 Z" fill="#f0b828"/>
</g>
<g id="avatar">
  <path d="M125,839 Q126,831 134,830 L167,821 Q172,806 181,797 Q190,786 204,784 L252,785 Q262,790 266,815 L304,829 Q314,832 314,842 Q313,870 301,904 L300,924 H145 L144,905 Q130,875 125,839 Z" fill="#3a3a3c"/>
  <path d="M134,834 L167,824 L182,890 L150,900 Z" fill="#444446"/>
  <path d="M266,818 L303,832 L296,896 L262,890 Z" fill="#444446"/>
  <path d="M150,840 L168,895 M290,840 L276,892" stroke="#555" stroke-width="1.2"/>
  <path d="M193,872 H242 L246,890 H190 Z" fill="#dca488"/>
  <path d="M142,943 Q141,906 160,899 L193,886 Q218,895 246,886 L282,898 Q300,906 300,943 Z" fill="#f0f0f0"/>
  <path d="M143,926 Q150,936 162,943 H142 Z M299,926 Q292,936 280,943 H300 Z" fill="#c4c4c4"/>
  <path d="M194,886 Q218,898 245,886" stroke="#d8d8d8" stroke-width="2" fill="none"/>
  <path d="M183,806 Q183,800 190,800 H241 Q248,800 248,808 L247,850 Q245,876 226,886 Q218,889 210,886 Q190,876 186,850 Z" fill="#e8b496"/>
  <path d="M186,800 Q190,850 200,868 Q215,886 232,880 Q210,889 194,872 Q184,850 184,820 Z" fill="#d8a080" opacity="0.6"/>
  <path d="M200,868 Q218,885 236,868 Q232,878 218,882 Q204,878 200,868 Z" fill="#c49478" opacity="0.7"/>
  <ellipse cx="247" cy="835" rx="4" ry="8" fill="#e0a888"/>
  <path d="M182,812 Q180,790 198,780 Q206,772 222,777 Q236,774 246,786 Q254,800 250,830 L247,810 Q240,802 215,806 Q195,806 184,822 Z" fill="#1f1f22"/>
  <path d="M190,832 Q200,826 210,831 M225,831 Q236,824 246,830" stroke="#7a4a30" stroke-width="2" fill="none"/>
  <g fill="none" stroke="#2a2e38" stroke-width="2">
    <rect x="181" y="835" width="26" height="16" rx="3"/>
    <rect x="215" y="835" width="27" height="16" rx="3"/>
    <path d="M207,840 H215 M181,838 L176,836 M242,838 L248,834"/>
  </g>
  <path d="M207,856 Q212,866 208,868 Q214,870 220,868" stroke="#b07a60" stroke-width="1.3" fill="none"/>
  <path d="M204,875 Q213,872 222,875 Q213,878 204,875 Z" fill="#8a4a3a"/>
</g>
</svg>
<!-- title bar -->
<div class="a" style="left:0;top:0;width:1920px;height:16px;background:#1b1b1d"></div>
<div class="a" style="left:0;top:0;width:35px;height:32px;background:#151515"></div>
<div class="a" style="left:1884px;top:0;width:36px;height:32px;background:#151515"></div>
<div class="a" style="left:35px;top:16px;width:1849px;height:16px;background:#666"></div>
<svg class="a" style="left:0;top:0" width="1920" height="32" viewBox="0 0 1920 32">
  <path d="M17,22.5 V14 L24,8 L31,14 V22.5 H27 V17.5 H21 V22.5 Z" fill="none" stroke="#fff" stroke-width="1.3" stroke-linejoin="round"/>
  <defs><linearGradient id="mpg" x1="0" y1="0" x2="0.6" y2="1"><stop offset="0" stop-color="#f7892b"/><stop offset="1" stop-color="#9b4fd0"/></linearGradient></defs>
  <circle cx="68" cy="15.8" r="8" fill="#2a2a2a" stroke="url(#mpg)" stroke-width="1.4"/>
  <path d="M66,12 L66,19.5 L72,15.8 Z" fill="#eee"/>
  <text x="88.7" y="20.9" font-size="12.2" fill="#fff" textLength="67.7" lengthAdjust="spacingAndGlyphs">Media Player</text>
  <line x1="1800" y1="16.5" x2="1810" y2="16.5" stroke="#c8c8c8" stroke-width="1"/>
  <rect x="1846.5" y="13.5" width="7.5" height="7.5" fill="none" stroke="#c0c0c0" stroke-width="1"/>
  <path d="M1848.5,13.5 V11.5 H1856 V19 H1854" fill="none" stroke="#c0c0c0" stroke-width="1"/>
  <path d="M1892,11 L1902,21 M1902,11 L1892,21" stroke="#c8c8c8" stroke-width="1.1"/>
</svg>
<!-- control bar -->
<div class="a" style="left:35px;top:924px;width:1849px;height:101px;background:rgba(0,0,0,0.624)"></div>
<div class="a" style="left:0;top:924px;width:35px;height:116px;background:#141414"></div>
<div class="a" style="left:1884px;top:924px;width:36px;height:116px;background:#141414"></div>
<div class="a" style="left:35px;top:1025px;width:1849px;height:15px;background:#19191b"></div>
<svg class="a" style="left:0;top:924px" width="1920" height="116" viewBox="0 924 1920 116">
  <text x="15.8" y="945" font-size="12" fill="#fff" textLength="36.7" lengthAdjust="spacingAndGlyphs">0:00:01</text>
  <text x="1866" y="945" font-size="12" fill="#fff" textLength="36.5" lengthAdjust="spacingAndGlyphs">0:24:01</text>
  <line x1="79" y1="940" x2="1840.5" y2="940" stroke="#b4b4b4" stroke-width="4" stroke-linecap="round"/>
  <line x1="79" y1="940" x2="1117" y2="940" stroke="#f5822a" stroke-width="4" stroke-linecap="round"/>
  <circle cx="1117" cy="940" r="10" fill="#3b3b3b"/>
  <circle cx="1117" cy="940" r="5.8" fill="#f5822a"/>
  <text x="15.4" y="1005" font-size="19" font-weight="bold" fill="#fff" textLength="39.6" lengthAdjust="spacingAndGlyphs">M34</text>
  <defs><linearGradient id="pg" x1="0" y1="0" x2="1" y2="1"><stop offset="0" stop-color="#f58220"/><stop offset="0.55" stop-color="#d0409a"/><stop offset="1" stop-color="#7a38b8"/></linearGradient></defs>
  <circle cx="960" cy="997.8" r="23" fill="#656565" stroke="url(#pg)" stroke-width="3.4"/>
  <path d="M952.5,989 Q951.5,987.5 953,987.2 L969,996.2 Q970.5,997.8 969,999.2 L953,1008.5 Q951.5,1008.5 952.5,1007 Z" fill="#fff"/>
  <!-- shuffle -->
  <g stroke="#fff" stroke-width="1.2" fill="none">
    <path d="M813,991 Q820,992 823,998 Q826,1004 829,1004"/>
    <path d="M813,1004 Q820,1004 823,998 Q826,992 829,991"/>
    <path d="M826,988.5 L829,991 L826,993.5 M826,1001.5 L829,1004 L826,1006.5"/>
    <path d="M813,990 L829,1006"/>
  </g>
  <!-- prev -->
  <rect x="857.5" y="990.5" width="1.3" height="14" fill="#fff"/>
  <path d="M872,991 V1005 L861,998 Z" fill="#fff" stroke="#fff" stroke-width="1" stroke-linejoin="round"/>
  <!-- rewind 10 -->
  <path d="M903,995 A8,7 0 0 1 916,995" fill="none" stroke="#fff" stroke-width="1.2"/>
  <path d="M901.5,992 L903,995.5 L906.5,994" fill="none" stroke="#fff" stroke-width="1.2"/>
  <text x="909.5" y="1005" font-size="10" fill="#fff" text-anchor="middle">10</text>
  <!-- forward 30 -->
  <path d="M1004,995 A8,7 0 0 1 1017,995" fill="none" stroke="#fff" stroke-width="1.2"/>
  <path d="M1014,994 L1017.5,995.5 L1019,992" fill="none" stroke="#fff" stroke-width="1.2"/>
  <text x="1011.5" y="1005" font-size="10" fill="#fff" text-anchor="middle">30</text>
  <!-- next -->
  <path d="M1048,991 V1005 L1059,998 Z" fill="#9a9a9a" stroke="#9a9a9a" stroke-width="1" stroke-linejoin="round"/>
  <rect x="1061.5" y="990.5" width="1.3" height="14" fill="#9a9a9a"/>
  <!-- repeat off -->
  <g stroke="#fff" stroke-width="1.2" fill="none">
    <path d="M1092,1000 A8,6.5 0 0 1 1104,992"/>
    <path d="M1106,996 A8,6.5 0 0 1 1094,1004"/>
    <path d="M1101,989.5 L1104.5,992 L1101,994.5 M1097,1001.5 L1093.5,1004 L1097,1006.5"/>
    <path d="M1091,990 L1107,1006"/>
  </g>
  <!-- right icons -->
  <g stroke="#fff" stroke-width="1.1" fill="none">
    <rect x="1714" y="992" width="16" height="12" rx="2"/>
    <path d="M1717,999 H1721 M1723,999 H1727 M1717,1001.5 H1727"/>
    <path d="M1758,995 H1761 L1765,991.5 V1004.5 L1761,1001 H1758 Z"/>
    <path d="M1767.5,995.5 Q1769,998 1767.5,1000.5 M1770,993 Q1773,998 1770,1003 M1772.5,990.5 Q1777,998 1772.5,1005.5"/>
    <path d="M1803,1005 L1817,991 M1809,991 H1817 V999 M1803,997 V1005 H1811"/>
    <path d="M1847,1005 V991.5 H1861 V1005 H1854 M1854,991.5 V998 H1861"/>
    <path d="M1847.5,1004.5 L1853,999 M1849,999 H1853 V1003"/>
  </g>
  <circle cx="1892" cy="998" r="1.5" fill="#fff"/><circle cx="1898" cy="998" r="1.5" fill="#fff"/><circle cx="1904" cy="998" r="1.5" fill="#fff"/>
</svg>
<!-- taskbar -->
<div class="a" style="left:0;top:1040px;width:1920px;height:40px;background:#1e1e1e"></div>
<div class="a" style="left:48px;top:1040px;width:288px;height:40px;background:#f0f0f0"></div>
<svg class="a" style="left:0;top:1040px" width="1920" height="40" viewBox="0 1040 1920 40">
  <path d="M16,1053 L23,1052 V1059.5 H16 Z M24,1051.8 L32,1050.7 V1059.5 H24 Z M16,1060.5 H23 V1068 L16,1067 Z M24,1060.5 H32 V1069.3 L24,1068.2 Z" fill="#fff"/>
  <circle cx="68.5" cy="1056.5" r="5" fill="none" stroke="#222" stroke-width="1.3"/>
  <path d="M64.8,1060.2 L60,1065" stroke="#222" stroke-width="1.5"/>
  <text x="88" y="1065.5" font-size="14.6" fill="#2b2b2b" textLength="127.5" lengthAdjust="spacingAndGlyphs">Type here to search</text>
  <!-- search box decoration -->
  <path d="M261,1062 Q268,1056 273,1058 Q278,1053 284,1055 L285,1067 Q279,1066 274,1070 Q268,1067 262,1072 Z" fill="#e8dcc0" stroke="#8a6a40" stroke-width="1"/>
  <path d="M273.5,1058 V1070" stroke="#8a6a40" stroke-width="0.8"/>
  <path d="M291,1048 V1043.5 H300 V1048" fill="none" stroke="#4a5a80" stroke-width="1.3"/>
  <rect x="286.5" y="1047" width="19" height="30" rx="3" fill="#5fd0c8"/>
  <g fill="#3aa8a0"><rect x="290" y="1050" width="1.5" height="24"/><rect x="295.2" y="1050" width="1.5" height="24"/><rect x="300.4" y="1050" width="1.5" height="24"/></g>
  <rect x="288" y="1077" width="3" height="2.5" fill="#4a5a80"/><rect x="301" y="1077" width="3" height="2.5" fill="#4a5a80"/>
  <ellipse cx="321" cy="1062" rx="11.5" ry="7" fill="#e6b656"/>
  <ellipse cx="319" cy="1059" rx="7" ry="5.5" fill="#f0c868"/>
  <path d="M312,1061 Q320,1066 329,1059" stroke="#c89030" stroke-width="1.6" fill="none"/>
  <!-- explorer -->
  <path d="M351,1052 H360 L362,1054 H374 V1068 H351 Z" fill="#f6c445"/>
  <rect x="351" y="1055.5" width="23" height="12.5" fill="#ffd866"/>
  <path d="M356,1068 V1061 H369 V1068 H366 V1064 H359 V1068 Z" fill="#3a8ee6"/>
  <rect x="343" y="1078" width="31" height="2" fill="#76b9ed"/><rect x="375" y="1078" width="8" height="2" fill="#5a8fbb"/>
  <!-- calculator -->
  <rect x="403" y="1048" width="18" height="24" rx="1.5" fill="#6d7880"/>
  <rect x="405" y="1050" width="14" height="4" fill="#5ad0f0"/>
  <g fill="#c8d0d6"><rect x="405" y="1056" width="3.5" height="3.5"/><rect x="409.5" y="1056" width="3.5" height="3.5"/><rect x="414" y="1056" width="3.5" height="3.5"/><rect x="405" y="1061" width="3.5" height="3.5"/><rect x="409.5" y="1061" width="3.5" height="3.5"/><rect x="405" y="1066" width="3.5" height="3.5"/><rect x="409.5" y="1066" width="3.5" height="3.5"/></g>
  <rect x="414" y="1061" width="4" height="8.5" fill="#1f4e8c"/>
  <!-- chrome -->
  <path d="M460,1060 L449.6,1054 A12,12 0 0 1 470.4,1054 Z" fill="#db4437"/>
  <path d="M460,1060 L470.4,1054 A12,12 0 0 1 460,1072 Z" fill="#f4c20d"/>
  <path d="M460,1060 L460,1072 A12,12 0 0 1 449.6,1054 Z" fill="#0f9d58"/>
  <circle cx="460" cy="1060" r="5.6" fill="#fff"/><circle cx="460" cy="1060" r="4.4" fill="#4285f4"/>
  <!-- purple app -->
  <rect x="497.5" y="1048" width="24" height="24" rx="7" fill="#7c4dff"/>
  <circle cx="509.5" cy="1060" r="7" fill="none" stroke="#fff" stroke-width="2"/>
  <!-- line -->
  <rect x="546.5" y="1048" width="24" height="24" rx="4" fill="#06c152"/>
  <ellipse cx="558.5" cy="1059" rx="9" ry="6.5" fill="#fff"/>
  <text x="558.5" y="1061.5" font-size="6.5" font-weight="bold" fill="#06c152" text-anchor="middle">LINE</text>
  <!-- snip -->
  <ellipse cx="607" cy="1058" rx="10" ry="7" fill="#ddd" stroke="#d03030" stroke-width="1.2" transform="rotate(-20 607 1058)"/>
  <circle cx="608" cy="1068" r="2.5" fill="none" stroke="#2aa0e0" stroke-width="1.5"/><circle cx="617" cy="1066" r="2.5" fill="none" stroke="#2aa0e0" stroke-width="1.5"/>
  <!-- cnc app -->
  <path d="M649,1052 L656,1049 L660,1062 L652,1065 Z" fill="#e8201a"/>
  <ellipse cx="657" cy="1060" rx="10" ry="6" fill="none" stroke="#e8e020" stroke-width="1"/>
  <rect x="660" y="1059" width="5" height="5" fill="none" stroke="#3030e0" stroke-width="1"/>
  <text x="656" y="1073.5" font-size="4.5" fill="#ccc" text-anchor="middle">CNC-STEP</text>
  <!-- steam -->
  <circle cx="705" cy="1060" r="11.5" fill="#1b3f7a"/>
  <circle cx="709" cy="1057" r="3.8" fill="none" stroke="#fff" stroke-width="1.6"/>
  <path d="M694,1061 L703,1065 L707,1059" fill="none" stroke="#fff" stroke-width="2.6"/>
  <circle cx="702" cy="1065" r="2.5" fill="#fff"/>
  <!-- red app -->
  <circle cx="755" cy="1060" r="12" fill="#e01e2e"/>
  <path d="M749,1066 V1057 H761 V1066 M749,1061 H761" fill="none" stroke="#fff" stroke-width="2.2"/>
  <circle cx="752" cy="1054.5" r="2.2" fill="none" stroke="#fff" stroke-width="1.2"/>
  <rect x="735" y="1078" width="40" height="2" fill="#76b9ed"/>
  <!-- media player active -->
  <rect x="780" y="1040" width="48" height="40" fill="#3d3d3d"/>
  <circle cx="804" cy="1060" r="11" fill="#2a2a2a" stroke="url(#mpg2)" stroke-width="1.6"/>
  <defs><linearGradient id="mpg2" x1="0" y1="0" x2="0.6" y2="1"><stop offset="0" stop-color="#f7892b"/><stop offset="1" stop-color="#9b4fd0"/></linearGradient></defs>
  <path d="M801,1054.5 V1065.5 L809.5,1060 Z" fill="#eee"/>
  <rect x="780" y="1078" width="48" height="2" fill="#76b9ed"/>
  <!-- tray -->
  <circle cx="1587" cy="1059.5" r="7.5" fill="#fff"/><path d="M1584,1057 A3,3 0 1 1 1590,1057 L1587,1063 Z" fill="#222"/>
  <path d="M1603,1060 Q1610,1053 1617,1060 Q1610,1067 1603,1060 Z" fill="#76b900"/>
  <rect x="1627" y="1052" width="16" height="16" rx="2" fill="#111"/><text x="1635" y="1059" font-size="6" fill="#ddd" text-anchor="middle">XP</text><text x="1635" y="1066" font-size="6" fill="#ddd" text-anchor="middle">pen</text>
  <rect x="1651" y="1052" width="16" height="16" fill="#ef4a3a"/><path d="M1655,1060 L1658,1057 L1661,1060 L1658,1063 Z M1660,1057 L1663,1060 L1660,1063" fill="#fff"/>
  <circle cx="1683" cy="1060" r="8" fill="#d01020"/><text x="1683" y="1063.5" font-size="9" font-weight="bold" fill="#fff" text-anchor="middle">A!</text>
  <circle cx="1707" cy="1060" r="8" fill="#1b5fa0"/><circle cx="1709.5" cy="1058" r="2.5" fill="none" stroke="#fff" stroke-width="1.2"/>
  <g stroke="#ddd" stroke-width="1.1" fill="none">
    <path d="M1726,1056 V1064 H1734 V1056 Z M1734,1058.5 L1737,1057 V1063 L1734,1061.5"/>
    <path d="M1749,1054 L1755,1052 L1761,1054 V1060 Q1761,1066 1755,1068 Q1749,1066 1749,1060 Z"/>
    <path d="M1771,1052.5 H1787 V1064 H1771 Z M1779,1064 V1068 M1775,1068 H1783"/>
    <path d="M1795,1057.5 H1798 L1802,1054 V1066 L1798,1062.5 H1795 Z M1805,1057 Q1807,1060 1805,1063 M1807.5,1055 Q1811,1060 1807.5,1065"/>
  </g>
  <circle cx="1758" cy="1064" r="4" fill="#1a9a3a"/>
  <text x="1821.2" y="1064.1" font-size="12.8" fill="#fff" textLength="22.5" lengthAdjust="spacingAndGlyphs">ENG</text>
  <text x="1861" y="1054.8" font-size="11.8" fill="#fff" textLength="43" lengthAdjust="spacingAndGlyphs">5:01 AM</text>
  <text x="1860" y="1072.6" font-size="12.2" fill="#fff" textLength="46" lengthAdjust="spacingAndGlyphs">3/9/2024</text>
  <rect x="1915" y="1042" width="1" height="38" fill="#666"/>
</svg>
</body></html>
